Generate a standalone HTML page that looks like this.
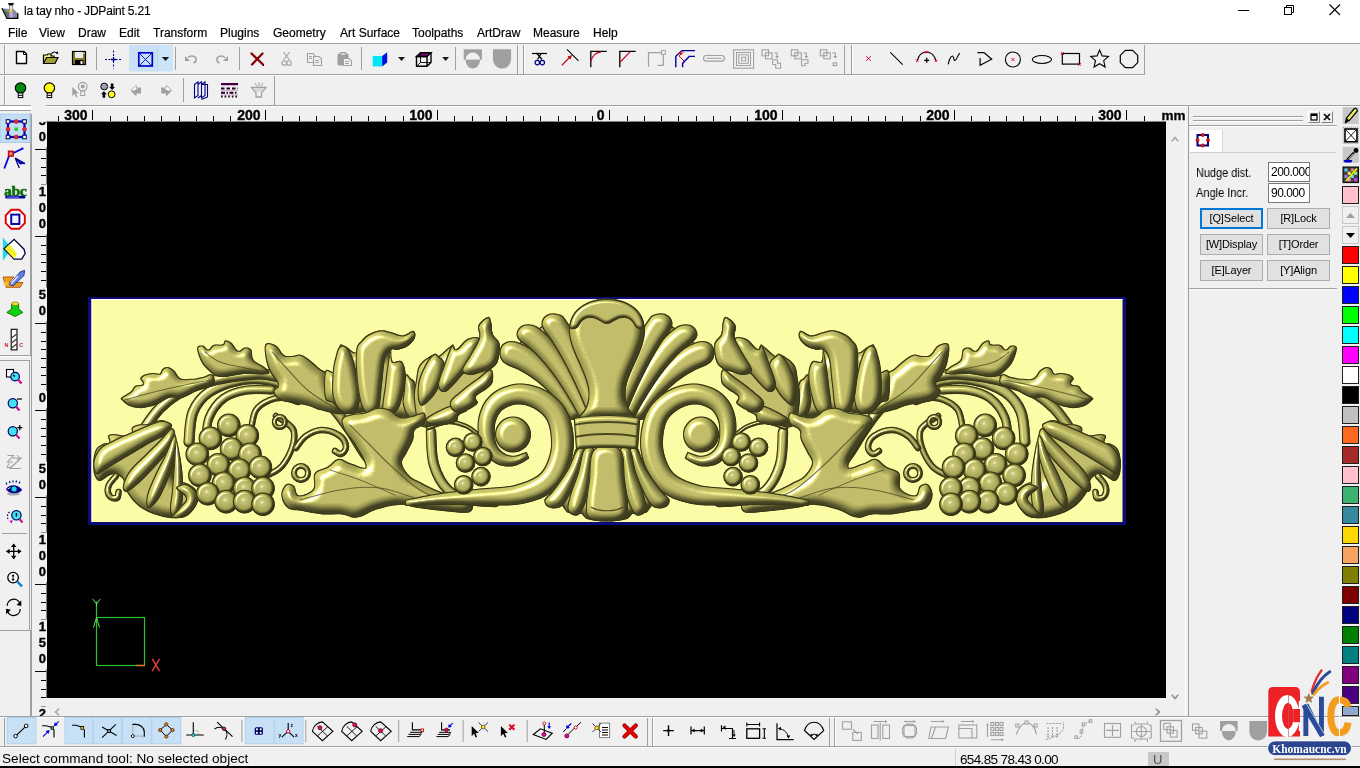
<!DOCTYPE html>
<html><head><meta charset="utf-8"><title>JDPaint</title>
<style>
*{margin:0;padding:0;box-sizing:border-box}
html,body{width:1360px;height:768px;overflow:hidden}
body{background:#f0f0f0;font-family:"Liberation Sans",sans-serif;position:relative;color:#000}
.a{position:absolute}
.t{white-space:nowrap;line-height:1;will-change:transform}
svg text{will-change:transform}
svg{overflow:visible}
</style></head><body>

<div class="a" style="left:0px;top:0px;width:1360px;height:43px;background:#fff"></div>
<div class="a t" style="left:23.5px;top:5px;font-size:12px;letter-spacing:-0.2px;-webkit-text-stroke:0.15px #000">la tay nho - JDPaint 5.21</div>
<svg class="a" style="left:0px;top:0px;" width="20" height="20" viewBox="0 0 20 20"><path d="M8,3 H14 L13,5.5 H9 Z" fill="#111"/><rect x="9.6" y="5.5" width="3" height="7.5" fill="#e8e8e8" stroke="#555" stroke-width="0.6"/><path d="M2,8.3 L6.9,18.3 H17.8 V13.2 L13.5,9 H12 V13 H9 V9 Z" fill="#8a8aa0"/><path d="M2,8.3 L6.9,18.3 H17.8 V13.2" fill="none" stroke="#000" stroke-width="1.3"/><rect x="9.5" y="13" width="3.5" height="4.5" fill="#c0a0ff"/><circle cx="10.9" cy="11" r="1.6" fill="#f0d020"/><path d="M3,9 L7,17 H9 V13 Z" fill="#607050"/></svg>
<div class="a t" style="left:7.5px;top:27px;font-size:12px;-webkit-text-stroke:0.2px #000">File</div>
<div class="a t" style="left:38.8px;top:27px;font-size:12px;-webkit-text-stroke:0.2px #000">View</div>
<div class="a t" style="left:78.4px;top:27px;font-size:12px;-webkit-text-stroke:0.2px #000">Draw</div>
<div class="a t" style="left:119.3px;top:27px;font-size:12px;-webkit-text-stroke:0.2px #000">Edit</div>
<div class="a t" style="left:153.4px;top:27px;font-size:12px;-webkit-text-stroke:0.2px #000">Transform</div>
<div class="a t" style="left:220px;top:27px;font-size:12px;-webkit-text-stroke:0.2px #000">Plugins</div>
<div class="a t" style="left:273.4px;top:27px;font-size:12px;-webkit-text-stroke:0.2px #000">Geometry</div>
<div class="a t" style="left:339.6px;top:27px;font-size:12px;-webkit-text-stroke:0.2px #000">Art Surface</div>
<div class="a t" style="left:411.7px;top:27px;font-size:12px;-webkit-text-stroke:0.2px #000">Toolpaths</div>
<div class="a t" style="left:476.5px;top:27px;font-size:12px;-webkit-text-stroke:0.2px #000">ArtDraw</div>
<div class="a t" style="left:533.3px;top:27px;font-size:12px;-webkit-text-stroke:0.2px #000">Measure</div>
<div class="a t" style="left:592.5px;top:27px;font-size:12px;-webkit-text-stroke:0.2px #000">Help</div>
<svg class="a" style="left:1238px;top:10px;" width="12" height="1" viewBox="0 0 12 1"><rect x="0" y="0" width="11" height="1" fill="#000"/></svg>
<svg class="a" style="left:1284px;top:5px;" width="11" height="10" viewBox="0 0 11 10"><rect x="0.5" y="2.5" width="7" height="7" fill="none" stroke="#000"/><path d="M2.5 2.5V0.5H9.5V7.5H7.5" fill="none" stroke="#000"/></svg>
<svg class="a" style="left:1329px;top:4px;" width="12" height="12" viewBox="0 0 12 12"><path d="M0.5 0.5L11 11M11 0.5L0.5 11" stroke="#000" stroke-width="1.1"/></svg>
<div class="a" style="left:0px;top:43px;width:1360px;height:1px;background:#a0a0a0"></div>
<div class="a" style="left:0px;top:74px;width:1145px;height:1px;background:#a0a0a0"></div>
<div class="a" style="left:0px;top:75px;width:1145px;height:1px;background:#fff"></div>
<div class="a" style="left:96px;top:47px;width:1px;height:23px;background:#a0a0a0"></div>
<div class="a" style="left:175px;top:47px;width:1px;height:23px;background:#a0a0a0"></div>
<div class="a" style="left:239px;top:47px;width:1px;height:23px;background:#a0a0a0"></div>
<div class="a" style="left:361px;top:47px;width:1px;height:23px;background:#a0a0a0"></div>
<div class="a" style="left:455px;top:47px;width:1px;height:23px;background:#a0a0a0"></div>
<div class="a" style="left:183px;top:78px;width:1px;height:24px;background:#a0a0a0"></div>
<div class="a" style="left:517px;top:45px;width:1px;height:29px;background:#a0a0a0"></div>
<div class="a" style="left:844px;top:45px;width:1px;height:29px;background:#a0a0a0"></div>
<div class="a" style="left:1144px;top:45px;width:1px;height:29px;background:#a0a0a0"></div>
<div class="a" style="left:523px;top:45px;width:1px;height:29px;background:#a0a0a0"></div>
<div class="a" style="left:524px;top:45px;width:1px;height:29px;background:#fff"></div>
<div class="a" style="left:851px;top:45px;width:1px;height:29px;background:#a0a0a0"></div>
<div class="a" style="left:852px;top:45px;width:1px;height:29px;background:#fff"></div>
<div class="a" style="left:0px;top:105px;width:31px;height:1px;background:#a0a0a0"></div>
<div class="a" style="left:0px;top:106px;width:31px;height:4px;background:#fff"></div>
<div class="a" style="left:4px;top:45px;width:1px;height:29px;background:#a0a0a0"></div>
<div class="a" style="left:5px;top:45px;width:1px;height:29px;background:#fff"></div>
<div class="a" style="left:4px;top:76px;width:1px;height:29px;background:#a0a0a0"></div>
<div class="a" style="left:5px;top:76px;width:1px;height:29px;background:#fff"></div>
<div class="a" style="left:274px;top:76px;width:1px;height:29px;background:#a0a0a0"></div>
<div class="a" style="left:46px;top:105px;width:1314px;height:1px;background:#a0a0a0"></div>
<div class="a" style="left:46px;top:106px;width:1314px;height:1px;background:#fff"></div>
<div class="a" style="left:47px;top:122px;width:1119px;height:576px;background:#000"></div>
<div class="a" style="left:46px;top:121px;width:1120px;height:1px;background:#808080"></div>
<div class="a" style="left:46px;top:121px;width:1px;height:577px;background:#808080"></div>
<svg class="a" style="left:0;top:0;overflow:hidden" width="1360" height="768" viewBox="0 0 1360 768"><defs><radialGradient id="gg" cx="0.45" cy="0.42" r="0.6"><stop offset="0" stop-color="#f2eeb8"/><stop offset="0.15" stop-color="#c0bc70"/><stop offset="0.5" stop-color="#a6a452"/><stop offset="1" stop-color="#86843e"/></radialGradient><filter id="L1" x="85" y="290" width="1045" height="240" filterUnits="userSpaceOnUse" color-interpolation-filters="sRGB">
<feGaussianBlur in="SourceAlpha" stdDeviation="1.6" result="b"/>
<feDiffuseLighting in="b" surfaceScale="5" diffuseConstant="1" lighting-color="#fff" result="d"><feDistantLight azimuth="225" elevation="45"/></feDiffuseLighting>
<feSpecularLighting in="b" surfaceScale="5" specularConstant="1.0" specularExponent="35" lighting-color="#ffffe0" result="s"><feDistantLight azimuth="225" elevation="45"/></feSpecularLighting>
<feComposite in="SourceGraphic" in2="d" operator="arithmetic" k1="0.85" k2="0.36" k3="0" k4="0" result="m"/>
<feComposite in="s" in2="SourceAlpha" operator="in" result="s2"/>
<feComposite in="m" in2="s2" operator="arithmetic" k1="0" k2="1" k3="1" k4="0" result="o"/>
<feMorphology in="SourceAlpha" operator="erode" radius="0.8" result="er"/>
<feComposite in="SourceAlpha" in2="er" operator="out" result="edge"/>
<feFlood flood-color="#3a3814" result="fc"/>
<feComposite in="fc" in2="edge" operator="in" result="ed"/>
<feComposite in="o" in2="SourceAlpha" operator="in" result="o2"/>
<feMerge><feMergeNode in="o2"/><feMergeNode in="ed"/></feMerge>
</filter><filter id="L1b" x="85" y="290" width="1045" height="240" filterUnits="userSpaceOnUse" color-interpolation-filters="sRGB">
<feGaussianBlur in="SourceAlpha" stdDeviation="2.2" result="b"/>
<feDiffuseLighting in="b" surfaceScale="6" diffuseConstant="1" lighting-color="#fff" result="d"><feDistantLight azimuth="225" elevation="45"/></feDiffuseLighting>
<feSpecularLighting in="b" surfaceScale="6" specularConstant="1.0" specularExponent="35" lighting-color="#ffffe0" result="s"><feDistantLight azimuth="225" elevation="45"/></feSpecularLighting>
<feComposite in="SourceGraphic" in2="d" operator="arithmetic" k1="0.85" k2="0.36" k3="0" k4="0" result="m"/>
<feComposite in="s" in2="SourceAlpha" operator="in" result="s2"/>
<feComposite in="m" in2="s2" operator="arithmetic" k1="0" k2="1" k3="1" k4="0" result="o"/>
<feMorphology in="SourceAlpha" operator="erode" radius="0.8" result="er"/>
<feComposite in="SourceAlpha" in2="er" operator="out" result="edge"/>
<feFlood flood-color="#3a3814" result="fc"/>
<feComposite in="fc" in2="edge" operator="in" result="ed"/>
<feComposite in="o" in2="SourceAlpha" operator="in" result="o2"/>
<feMerge><feMergeNode in="o2"/><feMergeNode in="ed"/></feMerge>
</filter><filter id="L2" x="85" y="290" width="1045" height="240" filterUnits="userSpaceOnUse" color-interpolation-filters="sRGB">
<feGaussianBlur in="SourceAlpha" stdDeviation="3" result="b"/>
<feDiffuseLighting in="b" surfaceScale="7.5" diffuseConstant="1" lighting-color="#fff" result="d"><feDistantLight azimuth="225" elevation="45"/></feDiffuseLighting>
<feSpecularLighting in="b" surfaceScale="7.5" specularConstant="1.0" specularExponent="35" lighting-color="#ffffe0" result="s"><feDistantLight azimuth="225" elevation="45"/></feSpecularLighting>
<feComposite in="SourceGraphic" in2="d" operator="arithmetic" k1="0.85" k2="0.36" k3="0" k4="0" result="m"/>
<feComposite in="s" in2="SourceAlpha" operator="in" result="s2"/>
<feComposite in="m" in2="s2" operator="arithmetic" k1="0" k2="1" k3="1" k4="0" result="o"/>
<feMorphology in="SourceAlpha" operator="erode" radius="0.8" result="er"/>
<feComposite in="SourceAlpha" in2="er" operator="out" result="edge"/>
<feFlood flood-color="#3a3814" result="fc"/>
<feComposite in="fc" in2="edge" operator="in" result="ed"/>
<feComposite in="o" in2="SourceAlpha" operator="in" result="o2"/>
<feMerge><feMergeNode in="o2"/><feMergeNode in="ed"/></feMerge>
</filter><filter id="L3" x="85" y="290" width="1045" height="240" filterUnits="userSpaceOnUse" color-interpolation-filters="sRGB">
<feGaussianBlur in="SourceAlpha" stdDeviation="4.5" result="b"/>
<feDiffuseLighting in="b" surfaceScale="10" diffuseConstant="1" lighting-color="#fff" result="d"><feDistantLight azimuth="225" elevation="45"/></feDiffuseLighting>
<feSpecularLighting in="b" surfaceScale="10" specularConstant="1.0" specularExponent="35" lighting-color="#ffffe0" result="s"><feDistantLight azimuth="225" elevation="45"/></feSpecularLighting>
<feComposite in="SourceGraphic" in2="d" operator="arithmetic" k1="0.85" k2="0.36" k3="0" k4="0" result="m"/>
<feComposite in="s" in2="SourceAlpha" operator="in" result="s2"/>
<feComposite in="m" in2="s2" operator="arithmetic" k1="0" k2="1" k3="1" k4="0" result="o"/>
<feMorphology in="SourceAlpha" operator="erode" radius="0.8" result="er"/>
<feComposite in="SourceAlpha" in2="er" operator="out" result="edge"/>
<feFlood flood-color="#3a3814" result="fc"/>
<feComposite in="fc" in2="edge" operator="in" result="ed"/>
<feComposite in="o" in2="SourceAlpha" operator="in" result="o2"/>
<feMerge><feMergeNode in="o2"/><feMergeNode in="ed"/></feMerge>
</filter></defs><rect x="88" y="297" width="1038" height="228" fill="#0c0c78"/><rect x="91.5" y="299" width="1031" height="223" fill="#fcfca6"/><rect x="91.5" y="299" width="1031" height="1.2" fill="#fffff0"/><rect x="91.5" y="299" width="1.2" height="223" fill="#fffff0"/><path d="M276.0,416.0 C278.2,417.4 284.8,421.1 288.0,424.0 C291.2,426.9 293.3,427.7 294.0,432.0 C294.7,436.3 294.2,441.9 292.0,448.0 C289.8,454.1 286.0,461.3 282.0,466.0 C278.0,470.7 273.6,472.2 270.0,474.0 C266.4,475.8 263.4,475.6 262.0,476.0" fill="none" stroke="#b8b460" stroke-width="6.5" stroke-linecap="round" filter="url(#L1)"/><circle cx="279.8" cy="422" r="5.5" fill="none" stroke="#b8b460" stroke-width="5" filter="url(#L1)"/><path d="M296.0,448.0 C297.8,445.8 301.3,439.2 306.0,436.0 C310.7,432.8 315.9,430.0 322.0,430.0 C328.1,430.0 335.7,432.9 340.0,436.0 C344.3,439.1 345.8,443.8 346.0,447.0 C346.2,450.2 343.0,453.3 341.0,454.0 C339.0,454.7 336.1,451.5 335.0,451.0" fill="none" stroke="#b8b460" stroke-width="6.5" stroke-linecap="round" filter="url(#L1)"/><circle cx="301" cy="473" r="7" fill="none" stroke="#b8b460" stroke-width="6" filter="url(#L1)"/><path d="M251.0,430.0 C251.9,426.4 252.6,415.4 256.0,410.0 C259.4,404.6 264.8,402.2 270.0,400.0 C275.2,397.8 280.0,397.6 285.0,398.0 C290.0,398.4 295.7,401.3 298.0,402.0" fill="none" stroke="#b8b460" stroke-width="6.5" stroke-linecap="round" filter="url(#L1)"/><path d="M189.0,442.0 C189.7,436.6 189.4,421.0 193.0,412.0 C196.6,403.0 200.5,397.8 209.0,392.0 C217.5,386.2 229.0,382.2 240.0,380.0 C251.0,377.8 260.6,378.6 270.0,380.0 C279.4,381.4 288.0,386.6 292.0,388.0" fill="none" stroke="#b8b460" stroke-width="11" stroke-linecap="round" filter="url(#L1)"/><path d="M206.0,442.0 C206.5,437.7 205.8,425.9 209.0,418.0 C212.2,410.1 217.2,403.0 224.0,398.0 C230.8,393.0 238.4,391.4 247.0,390.0 C255.6,388.6 267.5,390.0 272.0,390.0" fill="none" stroke="#b8b460" stroke-width="9" stroke-linecap="round" filter="url(#L1)"/><path d="M142.0,432.0 C145.2,427.7 152.3,415.6 160.0,408.0 C167.7,400.4 175.1,395.0 185.0,390.0 C194.9,385.0 204.2,382.7 215.0,380.0 C225.8,377.3 235.1,375.9 245.0,375.0 C254.9,374.1 260.1,373.2 270.0,375.0 C279.9,376.8 289.2,379.6 300.0,385.0 C310.8,390.4 321.0,396.9 330.0,405.0 C339.0,413.1 342.8,420.1 350.0,430.0 C357.2,439.9 361.9,451.4 370.0,460.0 C378.1,468.6 384.2,471.9 395.0,478.0 C405.8,484.1 423.7,491.1 430.0,494.0" fill="none" stroke="#b8b460" stroke-width="11" stroke-linecap="round" filter="url(#L1b)"/><path d="M431.0,432.0 C431.5,437.9 430.9,454.6 434.0,465.0 C437.1,475.4 441.5,483.7 448.0,490.0 C454.5,496.3 461.5,497.8 470.0,500.0 C478.5,502.2 490.5,501.6 495.0,502.0" fill="none" stroke="#b8b460" stroke-width="10.5" stroke-linecap="round" filter="url(#L1)"/><path d="M428.0,428.0 C431.6,426.9 441.2,422.4 448.0,422.0 C454.8,421.6 460.2,423.5 466.0,426.0 C471.8,428.5 477.5,434.2 480.0,436.0" fill="none" stroke="#b8b460" stroke-width="4.5" stroke-linecap="round" filter="url(#L1)"/><path d="M93.3,459.8 C93.8,456.5 94.3,452.1 96.0,449.2 C97.7,446.3 100.2,445.1 102.6,443.9 C105.0,442.7 108.3,444.0 109.3,442.6 C110.3,441.2 107.3,437.5 108.0,436.0 C108.7,434.5 110.6,434.1 113.2,434.0 C115.8,433.9 119.2,434.9 122.5,435.3 C125.8,435.7 130.1,437.3 131.8,436.0 C133.5,434.7 130.6,430.1 131.8,428.0 C133.0,425.9 135.6,425.3 138.5,424.6 C141.4,423.9 143.8,424.8 147.8,424.0 C151.9,423.2 157.2,420.0 161.0,420.0 C164.8,420.0 167.1,421.1 169.0,424.0 C170.9,426.9 170.9,431.9 171.6,436.0 C172.3,440.1 172.5,442.7 173.0,446.5 C173.5,450.3 173.8,453.4 174.3,457.2 C174.8,461.0 175.6,464.5 175.6,467.8 C175.6,471.1 174.0,472.9 174.3,475.8 C174.6,478.7 175.1,482.5 177.0,483.7 C178.9,484.9 181.6,481.4 184.9,482.4 C188.2,483.4 193.1,485.9 195.5,489.0 C197.9,492.1 198.7,495.8 198.2,499.6 C197.7,503.4 195.3,507.2 192.9,510.3 C190.5,513.4 188.7,515.5 184.9,516.9 C181.1,518.3 176.4,518.4 171.6,518.2 C166.8,518.0 163.2,517.0 158.4,515.6 C153.6,514.2 149.4,512.7 145.1,510.3 C140.8,507.9 138.1,506.1 134.5,502.3 C130.9,498.5 127.4,493.3 125.2,489.0 C123.0,484.7 124.9,481.0 122.5,478.4 C120.1,475.8 116.0,473.9 111.9,474.4 C107.9,474.9 103.1,480.7 100.0,481.0 C96.9,481.3 95.9,478.2 94.7,475.8 C93.5,473.4 93.6,470.7 93.3,467.8 C93.0,464.9 92.8,463.1 93.3,459.8Z" fill="#b8b460" filter="url(#L3)"/><path d="M116.0,476.0 C114.7,477.8 109.7,482.4 108.5,486.0 C107.3,489.6 108.0,493.8 109.5,496.0 C111.0,498.2 115.4,498.7 117.0,498.0 C118.6,497.3 118.2,493.1 118.5,492.0" fill="none" stroke="#b8b460" stroke-width="6.5" stroke-linecap="round" filter="url(#L1)"/><path d="M93.5,461.0 C94.2,456.3 97.0,451.4 100.0,448.0 C103.0,444.6 106.4,444.0 110.0,442.0 C113.6,440.0 116.0,438.8 120.0,437.0 C124.0,435.2 127.0,434.2 132.0,432.0 C137.0,429.8 142.6,427.0 148.0,425.0 C153.4,423.0 157.7,421.0 162.0,421.0 C166.3,421.0 171.5,422.5 172.0,425.0 C172.5,427.5 169.0,431.8 165.0,435.0 C161.0,438.2 155.4,439.9 150.0,443.0 C144.6,446.1 140.8,448.6 135.0,452.0 C129.2,455.4 123.4,458.8 118.0,462.0 C112.6,465.2 109.0,467.8 105.0,470.0 C101.0,472.2 98.1,475.6 96.0,474.0 C93.9,472.4 92.8,465.7 93.5,461.0Z" fill="#b8b460" filter="url(#L2)"/><path d="M172.0,428.0 C169.3,428.0 164.9,435.1 160.0,440.0 C155.1,444.9 150.4,449.6 145.0,455.0 C139.6,460.4 134.0,464.6 130.0,470.0 C126.0,475.4 123.7,481.0 123.0,485.0 C122.3,489.0 123.3,492.2 126.0,492.0 C128.7,491.8 133.3,488.0 138.0,484.0 C142.7,480.0 147.1,475.2 152.0,470.0 C156.9,464.8 160.9,460.4 165.0,455.0 C169.1,449.6 173.7,444.9 175.0,440.0 C176.3,435.1 174.7,428.0 172.0,428.0Z" fill="#b8b460" filter="url(#L2)"/><path d="M174.0,435.0 C171.8,436.8 168.4,447.8 165.0,455.0 C161.6,462.2 158.2,467.8 155.0,475.0 C151.8,482.2 148.3,489.1 147.0,495.0 C145.7,500.9 146.0,507.1 148.0,508.0 C150.0,508.9 154.6,504.7 158.0,500.0 C161.4,495.3 164.1,488.8 167.0,482.0 C169.9,475.2 172.2,468.7 174.0,462.0 C175.8,455.3 177.0,449.9 177.0,445.0 C177.0,440.1 176.2,433.2 174.0,435.0Z" fill="#b8b460" filter="url(#L2)"/><path d="M176.0,440.0 C174.9,441.8 174.7,456.0 174.0,465.0 C173.3,474.0 172.7,481.9 172.0,490.0 C171.3,498.1 169.5,505.1 170.0,510.0 C170.5,514.9 172.8,517.9 175.0,517.0 C177.2,516.1 180.6,511.7 182.0,505.0 C183.4,498.3 183.4,489.0 183.0,480.0 C182.6,471.0 181.3,462.2 180.0,455.0 C178.7,447.8 177.1,438.2 176.0,440.0Z" fill="#b8b460" filter="url(#L2)"/><path d="M176.0,488.0 C176.0,485.5 182.6,483.6 186.0,484.0 C189.4,484.4 192.8,487.1 195.0,490.0 C197.2,492.9 198.4,496.4 198.0,500.0 C197.6,503.6 195.7,506.9 193.0,510.0 C190.3,513.1 186.8,515.7 183.0,517.0 C179.2,518.3 172.5,518.8 172.0,517.0 C171.5,515.2 177.5,510.4 180.0,507.0 C182.5,503.6 186.7,501.4 186.0,498.0 C185.3,494.6 176.0,490.5 176.0,488.0Z" fill="#b8b460" filter="url(#L2)"/><path d="M121.3,397.7 C122.9,396.1 128.5,393.3 131.0,391.2 C133.5,389.1 132.9,387.3 135.0,386.0 C137.1,384.7 141.9,385.4 142.8,384.0 C143.7,382.6 139.7,379.9 140.2,378.2 C140.7,376.5 142.8,375.2 145.4,374.3 C148.0,373.4 151.9,373.1 154.5,373.0 C157.1,372.9 158.3,374.3 159.7,373.6 C161.1,372.9 160.9,370.2 162.3,369.0 C163.7,367.8 165.4,366.9 167.5,367.1 C169.6,367.3 171.7,368.3 174.0,370.3 C176.3,372.3 177.5,376.7 180.5,378.2 C183.5,379.7 186.9,379.0 190.9,378.8 C194.9,378.6 198.8,377.7 202.6,376.9 C206.4,376.1 209.9,373.0 212.0,374.3 C214.1,375.6 216.2,381.4 214.0,384.0 C211.8,386.6 205.6,386.5 200.0,389.0 C194.4,391.5 188.4,396.1 183.0,397.7 C177.6,399.3 174.2,396.8 170.0,397.7 C165.8,398.6 163.4,401.3 159.7,402.9 C156.0,404.5 153.0,405.9 149.3,406.8 C145.6,407.7 142.7,408.3 138.9,408.1 C135.1,407.9 131.4,406.9 128.4,405.5 C125.4,404.1 123.3,401.7 122.0,400.3 C120.7,398.9 119.7,399.3 121.3,397.7Z" fill="#b8b460" filter="url(#L2)"/><path d="M125.0,400.0 C129.5,398.7 140.1,395.5 150.0,393.0 C159.9,390.5 169.2,388.3 180.0,386.0 C190.8,383.7 204.6,381.1 210.0,380.0" fill="none" stroke="#4a4820" stroke-width="1.1" stroke-linecap="round" opacity="0.75"/><path d="M197.2,347.6 C197.7,345.0 201.0,345.3 203.0,345.6 C205.0,345.9 206.3,349.6 208.2,349.5 C210.1,349.4 210.8,345.9 213.4,345.0 C216.0,344.1 220.5,345.1 222.6,344.3 C224.7,343.5 223.6,340.6 225.2,340.4 C226.8,340.2 229.4,341.1 231.7,343.0 C234.0,344.9 235.9,350.0 238.2,350.8 C240.5,351.6 242.4,347.8 244.7,347.6 C247.0,347.4 249.6,347.3 251.2,349.5 C252.8,351.7 251.2,356.7 253.8,360.0 C256.4,363.3 262.9,365.3 265.5,367.8 C268.1,370.3 271.7,372.9 268.0,374.0 C264.3,375.1 253.6,373.5 245.0,374.0 C236.4,374.5 226.8,377.9 220.0,377.0 C213.2,376.1 210.5,372.1 207.0,369.0 C203.5,365.9 202.2,363.9 200.4,360.0 C198.6,356.1 196.7,350.2 197.2,347.6Z" fill="#b8b460" filter="url(#L2)"/><path d="M205.0,352.0 C207.7,353.8 212.8,359.1 220.0,362.0 C227.2,364.9 236.9,366.2 245.0,368.0 C253.1,369.8 261.4,371.3 265.0,372.0" fill="none" stroke="#4a4820" stroke-width="1.1" stroke-linecap="round" opacity="0.75"/><path d="M265.5,344.3 C267.3,341.7 272.7,343.7 276.0,345.6 C279.3,347.5 280.9,352.8 283.8,354.7 C286.6,356.6 288.5,356.0 291.6,356.0 C294.7,356.0 297.4,354.0 300.7,354.7 C304.0,355.4 306.3,357.4 309.8,360.0 C313.3,362.6 317.2,366.7 320.2,369.0 C323.2,371.3 325.1,370.7 326.7,373.0 C328.3,375.3 328.3,378.9 329.3,382.0 C330.3,385.1 330.1,386.2 332.0,390.0 C333.9,393.8 338.2,398.7 340.0,403.0 C341.8,407.3 345.6,412.7 342.0,414.0 C338.4,415.3 326.3,411.5 320.0,410.0 C313.7,408.5 314.0,407.2 307.0,405.5 C300.0,403.8 287.1,402.9 281.0,400.3 C274.9,397.7 273.8,394.0 273.3,391.2 C272.8,388.4 278.5,388.0 278.0,384.7 C277.5,381.4 272.9,377.4 270.7,373.0 C268.5,368.6 266.9,365.2 266.0,360.0 C265.1,354.8 263.7,346.9 265.5,344.3Z" fill="#b8b460" filter="url(#L3)"/><path d="M272.0,352.0 C275.2,355.6 283.2,364.8 290.0,372.0 C296.8,379.2 301.4,385.2 310.0,392.0 C318.6,398.8 333.0,406.8 338.0,410.0" fill="none" stroke="#4a4820" stroke-width="1.1" stroke-linecap="round" opacity="0.75"/><path d="M325.0,371.9 C326.4,367.2 330.5,372.1 332.8,371.9 C335.1,371.7 336.3,369.9 338.0,370.6 C339.7,371.3 341.8,380.0 342.0,375.8 C342.2,371.6 338.6,352.4 339.3,347.1 C340.0,341.8 342.8,345.6 345.8,346.5 C348.8,347.4 353.2,353.6 356.2,352.3 C359.2,351.0 359.9,342.8 362.7,339.3 C365.5,335.8 368.4,334.4 371.9,332.8 C375.4,331.2 378.6,330.2 382.3,330.2 C386.0,330.2 389.0,331.9 392.7,332.8 C396.4,333.7 399.4,335.7 403.1,335.4 C406.8,335.1 411.4,330.4 413.5,330.9 C415.6,331.4 415.7,335.3 414.8,338.0 C413.9,340.7 411.3,343.7 408.3,345.8 C405.3,347.9 400.9,349.0 397.9,349.7 C394.9,350.4 392.3,347.6 391.4,349.7 C390.5,351.8 390.8,359.3 392.7,361.4 C394.6,363.5 399.5,359.0 401.8,361.4 C404.1,363.8 404.1,371.4 405.7,374.5 C407.3,377.6 409.3,377.0 410.9,378.4 C412.5,379.8 413.4,379.0 414.8,382.3 C416.2,385.6 417.1,391.5 418.7,396.6 C420.3,401.7 422.7,406.9 423.9,410.9 C425.1,414.9 429.5,417.4 425.2,418.7 C420.9,420.0 409.9,419.2 400.0,418.0 C390.1,416.8 379.9,412.7 370.0,412.0 C360.1,411.3 351.7,415.6 345.0,414.0 C338.3,412.4 336.4,406.0 332.8,403.1 C329.2,400.2 326.4,403.5 325.0,397.9 C323.6,392.3 323.6,376.6 325.0,371.9Z" fill="#b8b460" filter="url(#L3)"/><path d="M332.8,372.0 C333.3,364.3 334.8,359.5 336.0,355.0 C337.2,350.5 337.5,348.5 339.3,347.0 C341.1,345.5 343.7,344.9 346.0,346.5 C348.3,348.1 350.0,350.9 352.0,356.0 C354.0,361.1 355.6,367.4 357.0,375.0 C358.4,382.6 360.4,391.3 360.0,398.0 C359.6,404.7 358.2,409.5 355.0,412.0 C351.8,414.5 346.0,414.5 342.0,412.0 C338.0,409.5 334.7,405.2 333.0,398.0 C331.3,390.8 332.3,379.7 332.8,372.0Z" fill="#b8b460" filter="url(#L2)"/><path d="M405.7,374.5 C406.9,372.4 409.3,377.0 410.9,378.4 C412.5,379.8 413.4,379.0 414.8,382.3 C416.2,385.6 417.1,391.5 418.7,396.6 C420.3,401.7 422.7,406.9 423.9,410.9 C425.1,414.9 427.7,417.4 425.2,418.7 C422.7,420.0 414.0,420.5 410.0,418.0 C406.0,415.5 404.1,410.0 403.0,405.0 C401.9,400.0 403.5,395.5 404.0,390.0 C404.5,384.5 404.5,376.6 405.7,374.5Z" fill="#b8b460" filter="url(#L2)"/><path d="M391.0,350.0 C391.8,349.9 390.8,359.3 392.7,361.4 C394.6,363.5 399.5,359.0 401.8,361.4 C404.1,363.8 405.5,368.5 405.7,374.5 C405.9,380.5 404.7,388.2 403.0,395.0 C401.3,401.8 399.6,408.9 396.0,412.0 C392.4,415.1 385.0,416.9 383.0,412.0 C381.0,407.1 384.1,394.0 385.0,385.0 C385.9,376.0 386.9,368.3 388.0,362.0 C389.1,355.7 390.2,350.1 391.0,350.0Z" fill="#b8b460" filter="url(#L2)"/><path d="M356.0,352.0 C356.8,342.9 359.8,342.8 362.7,339.3 C365.6,335.8 368.5,334.4 372.0,332.8 C375.5,331.2 378.2,330.2 382.0,330.2 C385.8,330.2 389.2,331.9 393.0,332.8 C396.8,333.7 399.3,335.7 403.0,335.4 C406.7,335.1 411.4,330.4 413.5,330.9 C415.6,331.4 415.8,335.3 414.8,338.0 C413.8,340.7 411.0,343.7 408.0,345.8 C405.0,347.9 401.1,348.9 398.0,349.7 C394.9,350.5 393.3,348.1 391.0,350.0 C388.7,351.9 386.6,353.7 385.0,360.0 C383.4,366.3 383.3,376.0 382.0,385.0 C380.7,394.0 381.1,405.1 378.0,410.0 C374.9,414.9 368.6,415.6 365.0,412.0 C361.4,408.4 359.6,400.8 358.0,390.0 C356.4,379.2 355.2,361.1 356.0,352.0Z" fill="#b8b460" filter="url(#L2)"/><path d="M420.0,364.3 C423.1,359.7 430.2,355.7 433.5,354.2 C436.8,352.7 435.2,357.6 438.6,355.9 C442.0,354.2 449.0,346.1 452.2,344.9 C455.4,343.7 453.7,350.2 456.4,349.1 C459.1,348.0 463.3,340.9 467.4,338.9 C471.5,336.9 477.2,340.4 479.2,338.0 C481.2,335.6 476.9,329.2 478.4,325.4 C479.9,321.6 485.4,317.5 487.7,316.9 C490.0,316.3 490.2,318.9 491.1,322.0 C492.0,325.1 491.3,329.9 492.8,333.9 C494.3,337.9 498.7,339.1 499.6,344.0 C500.5,348.9 499.4,356.3 497.9,360.9 C496.4,365.5 492.0,365.7 491.1,369.4 C490.2,373.1 493.4,377.9 492.8,381.2 C492.2,384.5 490.7,385.2 487.7,388.0 C484.7,390.8 477.7,393.8 475.9,396.5 C474.1,399.2 479.0,400.8 477.5,403.2 C476.0,405.6 470.7,407.9 467.4,410.0 C464.1,412.1 461.0,413.0 458.9,415.1 C456.8,417.2 459.5,420.1 455.5,421.9 C451.5,423.7 443.3,424.7 436.9,425.3 C430.5,425.9 424.1,429.9 420.0,425.3 C415.9,420.7 414.7,408.2 414.0,400.0 C413.3,391.8 414.9,386.4 416.0,380.0 C417.1,373.6 416.9,368.9 420.0,364.3Z" fill="#b8b460" filter="url(#L3)"/><path d="M433.5,354.2 C435.9,352.6 436.5,354.0 438.6,355.9 C440.7,357.8 444.7,359.8 445.0,365.0 C445.3,370.2 442.7,378.7 440.0,385.0 C437.3,391.3 433.6,396.4 430.0,400.0 C426.4,403.6 422.2,407.7 420.0,405.0 C417.8,402.3 417.1,392.2 418.0,385.0 C418.9,377.8 422.2,370.5 425.0,365.0 C427.8,359.5 431.1,355.8 433.5,354.2Z" fill="#b8b460" filter="url(#L2)"/><path d="M452.0,345.0 C454.2,342.1 453.6,350.2 456.4,349.1 C459.2,348.0 463.3,340.9 467.4,338.9 C471.5,336.9 477.1,336.0 479.0,338.0 C480.9,340.0 479.6,345.1 478.0,350.0 C476.4,354.9 473.6,359.6 470.0,365.0 C466.4,370.4 462.5,375.1 458.0,380.0 C453.5,384.9 448.6,391.1 445.0,392.0 C441.4,392.9 438.2,389.9 438.0,385.0 C437.8,380.1 441.5,372.2 444.0,365.0 C446.5,357.8 449.8,347.9 452.0,345.0Z" fill="#b8b460" filter="url(#L2)"/><path d="M467.4,410.0 C468.1,411.8 461.0,413.0 458.9,415.1 C456.8,417.2 459.5,420.1 455.5,421.9 C451.5,423.7 442.4,425.6 436.9,425.3 C431.4,425.0 424.4,422.8 425.0,420.0 C425.6,417.2 434.6,412.7 440.0,410.0 C445.4,407.3 450.1,405.0 455.0,405.0 C459.9,405.0 466.7,408.2 467.4,410.0Z" fill="#b8b460" filter="url(#L2)"/><path d="M491.1,369.4 C493.8,370.0 493.4,377.9 492.8,381.2 C492.2,384.5 490.7,385.2 487.7,388.0 C484.7,390.8 477.7,393.8 475.9,396.5 C474.1,399.2 479.0,400.8 477.5,403.2 C476.0,405.6 471.4,408.4 467.4,410.0 C463.3,411.6 458.1,413.4 455.0,412.0 C451.9,410.6 448.7,406.0 450.0,402.0 C451.3,398.0 457.0,394.3 462.0,390.0 C467.0,385.7 472.8,381.7 478.0,378.0 C483.2,374.3 488.4,368.8 491.1,369.4Z" fill="#b8b460" filter="url(#L2)"/><path d="M478.4,325.4 C480.0,321.6 485.4,317.5 487.7,316.9 C490.0,316.3 490.2,318.9 491.1,322.0 C492.0,325.1 491.3,329.9 492.8,333.9 C494.3,337.9 498.7,339.1 499.6,344.0 C500.5,348.9 499.4,356.4 497.9,360.9 C496.4,365.4 493.9,367.0 491.0,369.0 C488.1,371.0 485.8,370.9 482.0,372.0 C478.2,373.1 473.6,375.4 470.0,375.0 C466.4,374.6 462.0,373.6 462.0,370.0 C462.0,366.4 466.9,360.8 470.0,355.0 C473.1,349.2 477.5,343.3 479.0,338.0 C480.5,332.7 476.8,329.2 478.4,325.4Z" fill="#b8b460" filter="url(#L2)"/><path d="M341.7,419.0 C342.9,415.9 347.3,415.4 351.3,414.3 C355.3,413.2 359.4,413.8 364.0,412.7 C368.6,411.6 372.1,408.6 376.7,408.0 C381.3,407.4 386.0,408.4 389.4,409.5 C392.8,410.6 393.4,412.9 395.7,414.3 C398.0,415.7 399.2,417.2 402.1,417.5 C405.0,417.8 407.6,416.8 411.6,415.9 C415.6,415.0 422.0,411.3 424.3,412.7 C426.6,414.1 426.0,420.7 424.3,423.8 C422.6,426.9 416.8,427.3 414.8,430.2 C412.8,433.1 414.6,435.7 413.2,439.7 C411.8,443.7 408.9,448.1 406.9,452.4 C404.9,456.7 401.5,459.3 402.1,463.6 C402.7,467.9 406.6,472.9 410.0,476.3 C413.4,479.7 416.9,480.3 421.2,482.6 C425.5,484.9 428.7,486.8 433.9,489.0 C439.1,491.2 443.5,493.0 450.0,495.0 C456.5,497.0 466.4,496.9 470.0,500.0 C473.6,503.1 474.5,510.0 470.0,512.0 C465.5,514.0 454.4,511.9 445.0,511.2 C435.6,510.5 426.3,509.1 418.0,508.0 C409.7,506.9 406.3,504.6 398.9,504.9 C391.5,505.2 384.1,507.3 376.7,509.6 C369.3,511.9 363.9,516.7 357.6,517.6 C351.3,518.5 348.0,515.0 341.7,514.4 C335.4,513.8 329.6,515.0 322.7,514.4 C315.8,513.8 309.9,512.4 303.6,511.2 C297.3,510.0 291.7,510.9 287.7,508.0 C283.7,505.1 281.7,499.6 281.4,495.3 C281.1,491.0 283.7,485.9 286.0,484.2 C288.3,482.5 291.7,483.8 294.0,485.8 C296.3,487.8 295.4,494.7 298.8,495.3 C302.2,495.9 310.2,493.0 313.1,489.0 C316.0,485.0 312.1,477.1 314.7,473.1 C317.3,469.1 323.1,469.3 327.4,466.7 C331.7,464.1 334.3,459.4 338.6,458.8 C342.9,458.2 346.4,462.2 351.3,463.6 C356.2,465.0 365.0,470.1 365.6,466.7 C366.2,463.3 358.1,450.8 354.4,444.5 C350.7,438.2 347.2,436.4 344.9,431.8 C342.6,427.2 340.5,422.1 341.7,419.0Z" fill="#b8b460" filter="url(#L3)"/><path d="M350.0,425.0 C353.6,428.6 362.8,437.8 370.0,445.0 C377.2,452.2 381.0,456.9 390.0,465.0 C399.0,473.1 409.2,483.3 420.0,490.0 C430.8,496.7 444.6,499.8 450.0,502.0" fill="none" stroke="#4a4820" stroke-width="1.1" stroke-linecap="round" opacity="0.75"/><path d="M300.0,500.0 C307.2,498.2 325.6,492.2 340.0,490.0 C354.4,487.8 365.6,486.2 380.0,488.0 C394.4,489.8 412.8,497.8 420.0,500.0" fill="none" stroke="#4a4820" stroke-width="1.1" stroke-linecap="round" opacity="0.75"/><path d="M330.0,470.0 C335.4,471.8 348.3,475.5 360.0,480.0 C371.7,484.5 388.7,492.3 395.0,495.0" fill="none" stroke="#4a4820" stroke-width="1" stroke-linecap="round" opacity="0.75"/><circle cx="228.8" cy="425.3" r="11.8" fill="url(#gg)" filter="url(#L1)"/><circle cx="247.3" cy="435.8" r="11.8" fill="url(#gg)" filter="url(#L1)"/><circle cx="210.4" cy="438.4" r="11.8" fill="url(#gg)" filter="url(#L1)"/><circle cx="231.5" cy="449" r="11.8" fill="url(#gg)" filter="url(#L1)"/><circle cx="249.9" cy="454.2" r="11.8" fill="url(#gg)" filter="url(#L1)"/><circle cx="197.3" cy="454.2" r="11.8" fill="url(#gg)" filter="url(#L1)"/><circle cx="218.3" cy="464.7" r="11.8" fill="url(#gg)" filter="url(#L1)"/><circle cx="239.4" cy="470" r="11.8" fill="url(#gg)" filter="url(#L1)"/><circle cx="260.4" cy="467.4" r="11.8" fill="url(#gg)" filter="url(#L1)"/><circle cx="199.9" cy="475.3" r="11.8" fill="url(#gg)" filter="url(#L1)"/><circle cx="223.6" cy="483.2" r="11.8" fill="url(#gg)" filter="url(#L1)"/><circle cx="244.6" cy="488.4" r="11.8" fill="url(#gg)" filter="url(#L1)"/><circle cx="263" cy="488.4" r="11.8" fill="url(#gg)" filter="url(#L1)"/><circle cx="207.8" cy="493.7" r="11.8" fill="url(#gg)" filter="url(#L1)"/><circle cx="226.2" cy="501.6" r="11.8" fill="url(#gg)" filter="url(#L1)"/><circle cx="244.6" cy="501.6" r="11.8" fill="url(#gg)" filter="url(#L1)"/><circle cx="263" cy="504.2" r="11.8" fill="url(#gg)" filter="url(#L1)"/><path d="M507,350 C520,345 535,330 550,320 C565,316 575,330 585,360 C592,385 598,405 605,418 L572,420 C555,395 535,372 514,364 Z" fill="#b8b460" filter="url(#L2)"/><path d="M499.5,353 C499.5,343 507,339.5 516,341.5 C540,348 564,377 584,417 L571,420 C556,397 536,377 514,368 C505,365 499.5,361 499.5,353 Z" fill="#b8b460" filter="url(#L2)"/><path d="M516.5,334 C517.5,324.5 528,322 537,326.5 C560,341 581,380 597,417 L580,419 C566,392 547,362 525,345 C519,341 516.5,338 516.5,334 Z" fill="#b8b460" filter="url(#L2)"/><path d="M541.5,323 C542.5,313 554,310.5 563,316 C577,333 593,378 606,417 L589,418 C578,388 561,354 547,335 C543,330 541.5,327 541.5,323 Z" fill="#b8b460" filter="url(#L2)"/><path d="M405.4,506.0 L407.1,506.0 L409.2,506.0 L411.6,505.9 L414.4,505.8 L417.4,505.7 L420.5,505.5 L423.8,505.4 L427.2,505.2 L430.6,505.1 L434.0,505.0 L437.3,504.9 L440.5,504.8 L443.6,504.8 L446.8,504.9 L450.0,504.9 L453.3,505.0 L456.6,505.1 L460.0,505.2 L463.4,505.3 L466.8,505.4 L470.2,505.5 L473.7,505.5 L477.1,505.5 L480.5,505.4 L483.8,505.4 L487.1,505.4 L490.5,505.4 L494.0,505.5 L497.5,505.5 L501.1,505.5 L504.7,505.5 L508.2,505.4 L511.8,505.2 L515.4,504.9 L518.9,504.5 L522.3,503.9 L525.5,503.2 L528.6,502.5 L531.6,501.7 L534.7,500.8 L537.7,499.8 L540.7,498.7 L543.6,497.3 L546.5,495.8 L549.3,494.1 L552.0,492.2 L554.6,490.0 L557.1,487.7 L559.4,485.1 L561.5,482.4 L563.3,479.5 L565.1,476.6 L566.6,473.5 L568.0,470.4 L569.2,467.3 L570.3,464.2 L571.3,461.0 L572.1,457.9 L572.8,454.7 L573.3,451.6 L573.7,448.4 L573.9,445.0 L574.0,441.7 L573.9,438.4 L573.6,435.0 L573.2,431.8 L572.7,428.5 L572.1,425.4 L571.3,422.3 L570.5,419.3 L569.5,416.4 L568.4,413.6 L567.1,410.9 L565.6,408.2 L564.0,405.8 L562.3,403.5 L560.4,401.4 L558.5,399.5 L556.6,397.7 L554.6,396.0 L552.6,394.5 L550.6,393.1 L548.6,391.8 L546.6,390.5 L544.4,389.4 L542.1,388.3 L539.7,387.3 L537.3,386.4 L534.9,385.7 L532.5,385.0 L530.0,384.5 L527.5,384.0 L525.0,383.7 L522.5,383.6 L520.0,383.5 L517.5,383.6 L515.0,383.8 L512.5,384.2 L510.1,384.7 L507.7,385.4 L505.4,386.2 L503.1,387.0 L500.8,388.0 L498.6,389.1 L496.5,390.3 L494.5,391.6 L492.5,393.0 L490.7,394.5 L489.0,396.2 L487.4,397.9 L485.9,399.8 L484.6,401.7 L483.4,403.6 L482.4,405.6 L481.4,407.7 L480.6,409.7 L479.9,411.8 L479.2,413.9 L478.7,416.0 L478.3,418.1 L477.9,420.4 L477.7,422.7 L477.6,425.1 L477.5,427.5 L477.6,429.8 L477.8,432.2 L478.0,434.5 L478.3,436.8 L478.7,439.0 L479.2,441.2 L479.8,443.3 L480.4,445.3 L481.1,447.2 L482.0,449.1 L482.9,450.8 L484.0,452.5 L485.1,454.1 L486.2,455.6 L487.4,457.0 L488.7,458.3 L490.0,459.5 L491.3,460.6 L492.7,461.6 L494.1,462.5 L495.6,463.4 L497.1,464.2 L498.7,464.9 L500.4,465.4 L502.0,465.8 L503.7,466.1 L505.3,466.4 L507.0,466.5 L508.6,466.6 L510.2,466.5 L511.8,466.4 L513.4,466.2 L515.2,465.8 L517.0,465.3 L518.7,464.6 L520.3,463.8 L521.8,463.0 L523.3,462.2 L524.7,461.4 L526.0,460.6 L527.1,459.8 L528.1,459.2 L528.8,458.6 L529.4,458.2 L526.6,451.8 L525.7,452.0 L524.7,452.4 L523.5,452.8 L522.3,453.3 L520.9,453.8 L519.6,454.3 L518.2,454.8 L516.8,455.2 L515.5,455.5 L514.4,455.8 L513.4,455.8 L512.6,455.8 L511.7,455.7 L510.7,455.5 L509.7,455.3 L508.7,455.1 L507.7,454.7 L506.7,454.4 L505.8,454.0 L504.9,453.5 L504.1,453.0 L503.3,452.5 L502.6,452.0 L501.9,451.5 L501.3,450.8 L500.6,450.1 L499.9,449.4 L499.2,448.6 L498.6,447.7 L498.0,446.8 L497.5,445.9 L497.0,444.9 L496.6,443.9 L496.2,442.9 L495.9,441.8 L495.6,440.7 L495.4,439.5 L495.2,438.1 L495.0,436.5 L494.8,434.8 L494.8,433.1 L494.7,431.3 L494.8,429.5 L494.8,427.8 L495.0,426.1 L495.2,424.6 L495.4,423.1 L495.7,421.9 L496.1,420.6 L496.6,419.3 L497.1,418.0 L497.6,416.8 L498.2,415.6 L498.9,414.5 L499.5,413.4 L500.3,412.5 L501.0,411.6 L501.8,410.8 L502.5,410.1 L503.3,409.5 L504.2,408.9 L505.2,408.3 L506.4,407.7 L507.6,407.1 L508.9,406.5 L510.3,406.0 L511.7,405.5 L513.2,405.1 L514.6,404.8 L516.0,404.6 L517.3,404.5 L518.5,404.4 L519.7,404.4 L521.1,404.6 L522.5,404.7 L524.0,405.0 L525.5,405.3 L527.0,405.7 L528.6,406.2 L530.1,406.8 L531.5,407.4 L532.9,408.0 L534.2,408.7 L535.4,409.5 L536.7,410.3 L538.0,411.2 L539.3,412.2 L540.6,413.2 L541.7,414.2 L542.8,415.3 L543.8,416.4 L544.8,417.5 L545.6,418.7 L546.4,419.9 L547.0,421.1 L547.6,422.4 L548.2,424.0 L548.8,425.8 L549.3,427.9 L549.8,430.1 L550.2,432.4 L550.5,434.7 L550.8,437.2 L550.9,439.6 L551.0,441.9 L551.0,444.2 L550.9,446.4 L550.7,448.4 L550.4,450.5 L549.9,452.7 L549.4,455.0 L548.7,457.3 L548.0,459.6 L547.1,461.8 L546.2,463.9 L545.2,466.0 L544.2,467.8 L543.1,469.5 L542.0,471.0 L540.9,472.3 L539.8,473.5 L538.4,474.6 L537.0,475.7 L535.4,476.7 L533.6,477.7 L531.7,478.7 L529.6,479.7 L527.5,480.7 L525.2,481.6 L522.7,482.5 L520.2,483.3 L517.7,484.1 L515.2,484.8 L512.6,485.4 L509.7,485.9 L506.7,486.3 L503.6,486.7 L500.3,487.0 L496.9,487.2 L493.5,487.5 L490.0,487.7 L486.5,488.0 L483.0,488.3 L479.5,488.6 L476.2,488.9 L472.9,489.2 L469.5,489.5 L466.2,489.9 L462.8,490.3 L459.4,490.7 L456.0,491.0 L452.6,491.4 L449.3,491.8 L446.0,492.2 L442.7,492.7 L439.5,493.2 L436.3,493.7 L432.9,494.2 L429.5,494.8 L426.1,495.5 L422.7,496.1 L419.5,496.7 L416.3,497.4 L413.4,498.0 L410.7,498.5 L408.3,499.1 L406.3,499.6 L404.6,500.0Z" fill="#b8b460" filter="url(#L2)"/><circle cx="513" cy="434.5" r="18" fill="#b8b460" filter="url(#L2)"/><circle cx="455.5" cy="447.4" r="9.8" fill="url(#gg)" filter="url(#L1)"/><circle cx="472.8" cy="442" r="9.8" fill="url(#gg)" filter="url(#L1)"/><circle cx="482.9" cy="456.5" r="9.8" fill="url(#gg)" filter="url(#L1)"/><circle cx="465.5" cy="463" r="9.8" fill="url(#gg)" filter="url(#L1)"/><circle cx="481" cy="476.6" r="9.8" fill="url(#gg)" filter="url(#L1)"/><circle cx="463.7" cy="484.8" r="9.8" fill="url(#gg)" filter="url(#L1)"/><path d="M938.0,416.0C935.8,417.4,929.2,421.1,926.0,424.0C922.8,426.9,920.7,427.7,920.0,432.0C919.3,436.3,919.8,441.9,922.0,448.0C924.2,454.1,928.0,461.3,932.0,466.0C936.0,470.7,940.4,472.2,944.0,474.0C947.6,475.8,950.6,475.6,952.0,476.0" fill="none" stroke="#b8b460" stroke-width="6.5" stroke-linecap="round" filter="url(#L1)"/><circle cx="934.2" cy="422" r="5.5" fill="none" stroke="#b8b460" stroke-width="5" filter="url(#L1)"/><path d="M918.0,448.0C916.2,445.8,912.7,439.2,908.0,436.0C903.3,432.8,898.1,430.0,892.0,430.0C885.9,430.0,878.3,432.9,874.0,436.0C869.7,439.1,868.2,443.8,868.0,447.0C867.8,450.2,871.0,453.3,873.0,454.0C875.0,454.7,877.9,451.5,879.0,451.0" fill="none" stroke="#b8b460" stroke-width="6.5" stroke-linecap="round" filter="url(#L1)"/><circle cx="913.0" cy="473" r="7" fill="none" stroke="#b8b460" stroke-width="6" filter="url(#L1)"/><path d="M963.0,430.0C962.1,426.4,961.4,415.4,958.0,410.0C954.6,404.6,949.2,402.2,944.0,400.0C938.8,397.8,934.0,397.6,929.0,398.0C924.0,398.4,918.3,401.3,916.0,402.0" fill="none" stroke="#b8b460" stroke-width="6.5" stroke-linecap="round" filter="url(#L1)"/><path d="M1025.0,442.0C1024.3,436.6,1024.6,421.0,1021.0,412.0C1017.4,403.0,1013.5,397.8,1005.0,392.0C996.5,386.2,985.0,382.2,974.0,380.0C963.0,377.8,953.4,378.6,944.0,380.0C934.6,381.4,926.0,386.6,922.0,388.0" fill="none" stroke="#b8b460" stroke-width="11" stroke-linecap="round" filter="url(#L1)"/><path d="M1008.0,442.0C1007.5,437.7,1008.2,425.9,1005.0,418.0C1001.8,410.1,996.8,403.0,990.0,398.0C983.2,393.0,975.6,391.4,967.0,390.0C958.4,388.6,946.5,390.0,942.0,390.0" fill="none" stroke="#b8b460" stroke-width="9" stroke-linecap="round" filter="url(#L1)"/><path d="M1072.0,432.0C1068.8,427.7,1061.7,415.6,1054.0,408.0C1046.3,400.4,1038.9,395.0,1029.0,390.0C1019.1,385.0,1009.8,382.7,999.0,380.0C988.2,377.3,978.9,375.9,969.0,375.0C959.1,374.1,953.9,373.2,944.0,375.0C934.1,376.8,924.8,379.6,914.0,385.0C903.2,390.4,893.0,396.9,884.0,405.0C875.0,413.1,871.2,420.1,864.0,430.0C856.8,439.9,852.1,451.4,844.0,460.0C835.9,468.6,829.8,471.9,819.0,478.0C808.2,484.1,790.3,491.1,784.0,494.0" fill="none" stroke="#b8b460" stroke-width="11" stroke-linecap="round" filter="url(#L1b)"/><path d="M783.0,432.0C782.5,437.9,783.1,454.6,780.0,465.0C776.9,475.4,772.5,483.7,766.0,490.0C759.5,496.3,752.5,497.8,744.0,500.0C735.5,502.2,723.5,501.6,719.0,502.0" fill="none" stroke="#b8b460" stroke-width="10.5" stroke-linecap="round" filter="url(#L1)"/><path d="M786.0,428.0C782.4,426.9,772.8,422.4,766.0,422.0C759.2,421.6,753.8,423.5,748.0,426.0C742.2,428.5,736.5,434.2,734.0,436.0" fill="none" stroke="#b8b460" stroke-width="4.5" stroke-linecap="round" filter="url(#L1)"/><path d="M1120.7,459.8C1120.2,456.5,1119.7,452.1,1118.0,449.2C1116.3,446.3,1113.8,445.1,1111.4,443.9C1109.0,442.7,1105.7,444.0,1104.7,442.6C1103.7,441.2,1106.7,437.5,1106.0,436.0C1105.3,434.5,1103.4,434.1,1100.8,434.0C1098.2,433.9,1094.8,434.9,1091.5,435.3C1088.2,435.7,1083.9,437.3,1082.2,436.0C1080.5,434.7,1083.4,430.1,1082.2,428.0C1081.0,425.9,1078.4,425.3,1075.5,424.6C1072.6,423.9,1070.2,424.8,1066.2,424.0C1062.1,423.2,1056.8,420.0,1053.0,420.0C1049.2,420.0,1046.9,421.1,1045.0,424.0C1043.1,426.9,1043.1,431.9,1042.4,436.0C1041.7,440.1,1041.5,442.7,1041.0,446.5C1040.5,450.3,1040.2,453.4,1039.7,457.2C1039.2,461.0,1038.4,464.5,1038.4,467.8C1038.4,471.1,1040.0,472.9,1039.7,475.8C1039.4,478.7,1038.9,482.5,1037.0,483.7C1035.1,484.9,1032.4,481.4,1029.1,482.4C1025.8,483.4,1020.9,485.9,1018.5,489.0C1016.1,492.1,1015.3,495.8,1015.8,499.6C1016.3,503.4,1018.7,507.2,1021.1,510.3C1023.5,513.4,1025.3,515.5,1029.1,516.9C1032.9,518.3,1037.6,518.4,1042.4,518.2C1047.2,518.0,1050.8,517.0,1055.6,515.6C1060.4,514.2,1064.6,512.7,1068.9,510.3C1073.2,507.9,1075.9,506.1,1079.5,502.3C1083.1,498.5,1086.6,493.3,1088.8,489.0C1091.0,484.7,1089.1,481.0,1091.5,478.4C1093.9,475.8,1098.0,473.9,1102.1,474.4C1106.1,474.9,1110.9,480.7,1114.0,481.0C1117.1,481.3,1118.1,478.2,1119.3,475.8C1120.5,473.4,1120.4,470.7,1120.7,467.8C1121.0,464.9,1121.2,463.1,1120.7,459.8Z" fill="#b8b460" filter="url(#L3)"/><path d="M1098.0,476.0C1099.3,477.8,1104.3,482.4,1105.5,486.0C1106.7,489.6,1106.0,493.8,1104.5,496.0C1103.0,498.2,1098.6,498.7,1097.0,498.0C1095.4,497.3,1095.8,493.1,1095.5,492.0" fill="none" stroke="#b8b460" stroke-width="6.5" stroke-linecap="round" filter="url(#L1)"/><path d="M1120.5,461.0C1119.8,456.3,1117.0,451.4,1114.0,448.0C1111.0,444.6,1107.6,444.0,1104.0,442.0C1100.4,440.0,1098.0,438.8,1094.0,437.0C1090.0,435.2,1087.0,434.2,1082.0,432.0C1077.0,429.8,1071.4,427.0,1066.0,425.0C1060.6,423.0,1056.3,421.0,1052.0,421.0C1047.7,421.0,1042.5,422.5,1042.0,425.0C1041.5,427.5,1045.0,431.8,1049.0,435.0C1053.0,438.2,1058.6,439.9,1064.0,443.0C1069.4,446.1,1073.2,448.6,1079.0,452.0C1084.8,455.4,1090.6,458.8,1096.0,462.0C1101.4,465.2,1105.0,467.8,1109.0,470.0C1113.0,472.2,1115.9,475.6,1118.0,474.0C1120.1,472.4,1121.2,465.7,1120.5,461.0Z" fill="#b8b460" filter="url(#L2)"/><path d="M1042.0,428.0C1044.7,428.0,1049.1,435.1,1054.0,440.0C1058.9,444.9,1063.6,449.6,1069.0,455.0C1074.4,460.4,1080.0,464.6,1084.0,470.0C1088.0,475.4,1090.3,481.0,1091.0,485.0C1091.7,489.0,1090.7,492.2,1088.0,492.0C1085.3,491.8,1080.7,488.0,1076.0,484.0C1071.3,480.0,1066.9,475.2,1062.0,470.0C1057.1,464.8,1053.1,460.4,1049.0,455.0C1044.9,449.6,1040.3,444.9,1039.0,440.0C1037.7,435.1,1039.3,428.0,1042.0,428.0Z" fill="#b8b460" filter="url(#L2)"/><path d="M1040.0,435.0C1042.2,436.8,1045.6,447.8,1049.0,455.0C1052.4,462.2,1055.8,467.8,1059.0,475.0C1062.2,482.2,1065.7,489.1,1067.0,495.0C1068.3,500.9,1068.0,507.1,1066.0,508.0C1064.0,508.9,1059.4,504.7,1056.0,500.0C1052.6,495.3,1049.9,488.8,1047.0,482.0C1044.1,475.2,1041.8,468.7,1040.0,462.0C1038.2,455.3,1037.0,449.9,1037.0,445.0C1037.0,440.1,1037.8,433.2,1040.0,435.0Z" fill="#b8b460" filter="url(#L2)"/><path d="M1038.0,440.0C1039.1,441.8,1039.3,456.0,1040.0,465.0C1040.7,474.0,1041.3,481.9,1042.0,490.0C1042.7,498.1,1044.5,505.1,1044.0,510.0C1043.5,514.9,1041.2,517.9,1039.0,517.0C1036.8,516.1,1033.4,511.7,1032.0,505.0C1030.6,498.3,1030.6,489.0,1031.0,480.0C1031.4,471.0,1032.7,462.2,1034.0,455.0C1035.3,447.8,1036.9,438.2,1038.0,440.0Z" fill="#b8b460" filter="url(#L2)"/><path d="M1038.0,488.0C1038.0,485.5,1031.4,483.6,1028.0,484.0C1024.6,484.4,1021.2,487.1,1019.0,490.0C1016.8,492.9,1015.6,496.4,1016.0,500.0C1016.4,503.6,1018.3,506.9,1021.0,510.0C1023.7,513.1,1027.2,515.7,1031.0,517.0C1034.8,518.3,1041.5,518.8,1042.0,517.0C1042.5,515.2,1036.5,510.4,1034.0,507.0C1031.5,503.6,1027.3,501.4,1028.0,498.0C1028.7,494.6,1038.0,490.5,1038.0,488.0Z" fill="#b8b460" filter="url(#L2)"/><path d="M1092.7,397.7C1091.1,396.1,1085.5,393.3,1083.0,391.2C1080.5,389.1,1081.1,387.3,1079.0,386.0C1076.9,384.7,1072.1,385.4,1071.2,384.0C1070.3,382.6,1074.3,379.9,1073.8,378.2C1073.3,376.5,1071.2,375.2,1068.6,374.3C1066.0,373.4,1062.1,373.1,1059.5,373.0C1056.9,372.9,1055.7,374.3,1054.3,373.6C1052.9,372.9,1053.1,370.2,1051.7,369.0C1050.3,367.8,1048.6,366.9,1046.5,367.1C1044.4,367.3,1042.3,368.3,1040.0,370.3C1037.7,372.3,1036.5,376.7,1033.5,378.2C1030.5,379.7,1027.1,379.0,1023.1,378.8C1019.1,378.6,1015.2,377.7,1011.4,376.9C1007.6,376.1,1004.1,373.0,1002.0,374.3C999.9,375.6,997.8,381.4,1000.0,384.0C1002.2,386.6,1008.4,386.5,1014.0,389.0C1019.6,391.5,1025.6,396.1,1031.0,397.7C1036.4,399.3,1039.8,396.8,1044.0,397.7C1048.2,398.6,1050.6,401.3,1054.3,402.9C1058.0,404.5,1061.0,405.9,1064.7,406.8C1068.4,407.7,1071.3,408.3,1075.1,408.1C1078.9,407.9,1082.6,406.9,1085.6,405.5C1088.6,404.1,1090.7,401.7,1092.0,400.3C1093.3,398.9,1094.3,399.3,1092.7,397.7Z" fill="#b8b460" filter="url(#L2)"/><path d="M1089.0,400.0C1084.5,398.7,1073.9,395.5,1064.0,393.0C1054.1,390.5,1044.8,388.3,1034.0,386.0C1023.2,383.7,1009.4,381.1,1004.0,380.0" fill="none" stroke="#4a4820" stroke-width="1.1" stroke-linecap="round" opacity="0.75"/><path d="M1016.8,347.6C1016.3,345.0,1013.0,345.3,1011.0,345.6C1009.0,345.9,1007.7,349.6,1005.8,349.5C1003.9,349.4,1003.2,345.9,1000.6,345.0C998.0,344.1,993.5,345.1,991.4,344.3C989.3,343.5,990.4,340.6,988.8,340.4C987.2,340.2,984.6,341.1,982.3,343.0C980.0,344.9,978.1,350.0,975.8,350.8C973.5,351.6,971.6,347.8,969.3,347.6C967.0,347.4,964.4,347.3,962.8,349.5C961.2,351.7,962.8,356.7,960.2,360.0C957.6,363.3,951.1,365.3,948.5,367.8C945.9,370.3,942.3,372.9,946.0,374.0C949.7,375.1,960.4,373.5,969.0,374.0C977.6,374.5,987.2,377.9,994.0,377.0C1000.8,376.1,1003.5,372.1,1007.0,369.0C1010.5,365.9,1011.8,363.9,1013.6,360.0C1015.4,356.1,1017.3,350.2,1016.8,347.6Z" fill="#b8b460" filter="url(#L2)"/><path d="M1009.0,352.0C1006.3,353.8,1001.2,359.1,994.0,362.0C986.8,364.9,977.1,366.2,969.0,368.0C960.9,369.8,952.6,371.3,949.0,372.0" fill="none" stroke="#4a4820" stroke-width="1.1" stroke-linecap="round" opacity="0.75"/><path d="M948.5,344.3C946.7,341.7,941.3,343.7,938.0,345.6C934.7,347.5,933.1,352.8,930.2,354.7C927.4,356.6,925.5,356.0,922.4,356.0C919.3,356.0,916.6,354.0,913.3,354.7C910.0,355.4,907.7,357.4,904.2,360.0C900.7,362.6,896.8,366.7,893.8,369.0C890.8,371.3,888.9,370.7,887.3,373.0C885.7,375.3,885.7,378.9,884.7,382.0C883.7,385.1,883.9,386.2,882.0,390.0C880.1,393.8,875.8,398.7,874.0,403.0C872.2,407.3,868.4,412.7,872.0,414.0C875.6,415.3,887.7,411.5,894.0,410.0C900.3,408.5,900.0,407.2,907.0,405.5C914.0,403.8,926.9,402.9,933.0,400.3C939.1,397.7,940.2,394.0,940.7,391.2C941.2,388.4,935.5,388.0,936.0,384.7C936.5,381.4,941.1,377.4,943.3,373.0C945.5,368.6,947.1,365.2,948.0,360.0C948.9,354.8,950.3,346.9,948.5,344.3Z" fill="#b8b460" filter="url(#L3)"/><path d="M942.0,352.0C938.8,355.6,930.8,364.8,924.0,372.0C917.2,379.2,912.6,385.2,904.0,392.0C895.4,398.8,881.0,406.8,876.0,410.0" fill="none" stroke="#4a4820" stroke-width="1.1" stroke-linecap="round" opacity="0.75"/><path d="M889.0,371.9C887.6,367.2,883.5,372.1,881.2,371.9C878.9,371.7,877.7,369.9,876.0,370.6C874.3,371.3,872.2,380.0,872.0,375.8C871.8,371.6,875.4,352.4,874.7,347.1C874.0,341.8,871.2,345.6,868.2,346.5C865.2,347.4,860.8,353.6,857.8,352.3C854.8,351.0,854.1,342.8,851.3,339.3C848.5,335.8,845.6,334.4,842.1,332.8C838.6,331.2,835.4,330.2,831.7,330.2C828.0,330.2,825.0,331.9,821.3,332.8C817.6,333.7,814.6,335.7,810.9,335.4C807.2,335.1,802.6,330.4,800.5,330.9C798.4,331.4,798.3,335.3,799.2,338.0C800.1,340.7,802.7,343.7,805.7,345.8C808.7,347.9,813.1,349.0,816.1,349.7C819.1,350.4,821.7,347.6,822.6,349.7C823.5,351.8,823.2,359.3,821.3,361.4C819.4,363.5,814.5,359.0,812.2,361.4C809.9,363.8,809.9,371.4,808.3,374.5C806.7,377.6,804.7,377.0,803.1,378.4C801.5,379.8,800.6,379.0,799.2,382.3C797.8,385.6,796.9,391.5,795.3,396.6C793.7,401.7,791.3,406.9,790.1,410.9C788.9,414.9,784.5,417.4,788.8,418.7C793.1,420.0,804.1,419.2,814.0,418.0C823.9,416.8,834.1,412.7,844.0,412.0C853.9,411.3,862.3,415.6,869.0,414.0C875.7,412.4,877.6,406.0,881.2,403.1C884.8,400.2,887.6,403.5,889.0,397.9C890.4,392.3,890.4,376.6,889.0,371.9Z" fill="#b8b460" filter="url(#L3)"/><path d="M881.2,372.0C880.7,364.3,879.2,359.5,878.0,355.0C876.8,350.5,876.5,348.5,874.7,347.0C872.9,345.5,870.3,344.9,868.0,346.5C865.7,348.1,864.0,350.9,862.0,356.0C860.0,361.1,858.4,367.4,857.0,375.0C855.6,382.6,853.6,391.3,854.0,398.0C854.4,404.7,855.8,409.5,859.0,412.0C862.2,414.5,868.0,414.5,872.0,412.0C876.0,409.5,879.3,405.2,881.0,398.0C882.7,390.8,881.7,379.7,881.2,372.0Z" fill="#b8b460" filter="url(#L2)"/><path d="M808.3,374.5C807.1,372.4,804.7,377.0,803.1,378.4C801.5,379.8,800.6,379.0,799.2,382.3C797.8,385.6,796.9,391.5,795.3,396.6C793.7,401.7,791.3,406.9,790.1,410.9C788.9,414.9,786.3,417.4,788.8,418.7C791.3,420.0,800.0,420.5,804.0,418.0C808.0,415.5,809.9,410.0,811.0,405.0C812.1,400.0,810.5,395.5,810.0,390.0C809.5,384.5,809.5,376.6,808.3,374.5Z" fill="#b8b460" filter="url(#L2)"/><path d="M823.0,350.0C822.2,349.9,823.2,359.3,821.3,361.4C819.4,363.5,814.5,359.0,812.2,361.4C809.9,363.8,808.5,368.5,808.3,374.5C808.1,380.5,809.3,388.2,811.0,395.0C812.7,401.8,814.4,408.9,818.0,412.0C821.6,415.1,829.0,416.9,831.0,412.0C833.0,407.1,829.9,394.0,829.0,385.0C828.1,376.0,827.1,368.3,826.0,362.0C824.9,355.7,823.8,350.1,823.0,350.0Z" fill="#b8b460" filter="url(#L2)"/><path d="M858.0,352.0C857.2,342.9,854.2,342.8,851.3,339.3C848.4,335.8,845.5,334.4,842.0,332.8C838.5,331.2,835.8,330.2,832.0,330.2C828.2,330.2,824.8,331.9,821.0,332.8C817.2,333.7,814.7,335.7,811.0,335.4C807.3,335.1,802.6,330.4,800.5,330.9C798.4,331.4,798.2,335.3,799.2,338.0C800.2,340.7,803.0,343.7,806.0,345.8C809.0,347.9,812.9,348.9,816.0,349.7C819.1,350.5,820.7,348.1,823.0,350.0C825.3,351.9,827.4,353.7,829.0,360.0C830.6,366.3,830.7,376.0,832.0,385.0C833.3,394.0,832.9,405.1,836.0,410.0C839.1,414.9,845.4,415.6,849.0,412.0C852.6,408.4,854.4,400.8,856.0,390.0C857.6,379.2,858.8,361.1,858.0,352.0Z" fill="#b8b460" filter="url(#L2)"/><path d="M794.0,364.3C790.9,359.7,783.8,355.7,780.5,354.2C777.2,352.7,778.8,357.6,775.4,355.9C772.0,354.2,765.0,346.1,761.8,344.9C758.6,343.7,760.3,350.2,757.6,349.1C754.9,348.0,750.7,340.9,746.6,338.9C742.5,336.9,736.8,340.4,734.8,338.0C732.8,335.6,737.1,329.2,735.6,325.4C734.1,321.6,728.6,317.5,726.3,316.9C724.0,316.3,723.8,318.9,722.9,322.0C722.0,325.1,722.7,329.9,721.2,333.9C719.7,337.9,715.3,339.1,714.4,344.0C713.5,348.9,714.6,356.3,716.1,360.9C717.6,365.5,722.0,365.7,722.9,369.4C723.8,373.1,720.6,377.9,721.2,381.2C721.8,384.5,723.3,385.2,726.3,388.0C729.3,390.8,736.3,393.8,738.1,396.5C739.9,399.2,735.0,400.8,736.5,403.2C738.0,405.6,743.3,407.9,746.6,410.0C749.9,412.1,753.0,413.0,755.1,415.1C757.2,417.2,754.5,420.1,758.5,421.9C762.5,423.7,770.7,424.7,777.1,425.3C783.5,425.9,789.9,429.9,794.0,425.3C798.1,420.7,799.3,408.2,800.0,400.0C800.7,391.8,799.1,386.4,798.0,380.0C796.9,373.6,797.1,368.9,794.0,364.3Z" fill="#b8b460" filter="url(#L3)"/><path d="M780.5,354.2C778.1,352.6,777.5,354.0,775.4,355.9C773.3,357.8,769.3,359.8,769.0,365.0C768.7,370.2,771.3,378.7,774.0,385.0C776.7,391.3,780.4,396.4,784.0,400.0C787.6,403.6,791.8,407.7,794.0,405.0C796.2,402.3,796.9,392.2,796.0,385.0C795.1,377.8,791.8,370.5,789.0,365.0C786.2,359.5,782.9,355.8,780.5,354.2Z" fill="#b8b460" filter="url(#L2)"/><path d="M762.0,345.0C759.8,342.1,760.4,350.2,757.6,349.1C754.8,348.0,750.7,340.9,746.6,338.9C742.5,336.9,736.9,336.0,735.0,338.0C733.1,340.0,734.4,345.1,736.0,350.0C737.6,354.9,740.4,359.6,744.0,365.0C747.6,370.4,751.5,375.1,756.0,380.0C760.5,384.9,765.4,391.1,769.0,392.0C772.6,392.9,775.8,389.9,776.0,385.0C776.2,380.1,772.5,372.2,770.0,365.0C767.5,357.8,764.2,347.9,762.0,345.0Z" fill="#b8b460" filter="url(#L2)"/><path d="M746.6,410.0C745.9,411.8,753.0,413.0,755.1,415.1C757.2,417.2,754.5,420.1,758.5,421.9C762.5,423.7,771.6,425.6,777.1,425.3C782.6,425.0,789.6,422.8,789.0,420.0C788.4,417.2,779.4,412.7,774.0,410.0C768.6,407.3,763.9,405.0,759.0,405.0C754.1,405.0,747.3,408.2,746.6,410.0Z" fill="#b8b460" filter="url(#L2)"/><path d="M722.9,369.4C720.2,370.0,720.6,377.9,721.2,381.2C721.8,384.5,723.3,385.2,726.3,388.0C729.3,390.8,736.3,393.8,738.1,396.5C739.9,399.2,735.0,400.8,736.5,403.2C738.0,405.6,742.6,408.4,746.6,410.0C750.7,411.6,755.9,413.4,759.0,412.0C762.1,410.6,765.3,406.0,764.0,402.0C762.7,398.0,757.0,394.3,752.0,390.0C747.0,385.7,741.2,381.7,736.0,378.0C730.8,374.3,725.6,368.8,722.9,369.4Z" fill="#b8b460" filter="url(#L2)"/><path d="M735.6,325.4C734.0,321.6,728.6,317.5,726.3,316.9C724.0,316.3,723.8,318.9,722.9,322.0C722.0,325.1,722.7,329.9,721.2,333.9C719.7,337.9,715.3,339.1,714.4,344.0C713.5,348.9,714.6,356.4,716.1,360.9C717.6,365.4,720.1,367.0,723.0,369.0C725.9,371.0,728.2,370.9,732.0,372.0C735.8,373.1,740.4,375.4,744.0,375.0C747.6,374.6,752.0,373.6,752.0,370.0C752.0,366.4,747.1,360.8,744.0,355.0C740.9,349.2,736.5,343.3,735.0,338.0C733.5,332.7,737.2,329.2,735.6,325.4Z" fill="#b8b460" filter="url(#L2)"/><path d="M872.3,419.0C871.1,415.9,866.7,415.4,862.7,414.3C858.7,413.2,854.6,413.8,850.0,412.7C845.4,411.6,841.9,408.6,837.3,408.0C832.7,407.4,828.0,408.4,824.6,409.5C821.2,410.6,820.6,412.9,818.3,414.3C816.0,415.7,814.8,417.2,811.9,417.5C809.0,417.8,806.4,416.8,802.4,415.9C798.4,415.0,792.0,411.3,789.7,412.7C787.4,414.1,788.0,420.7,789.7,423.8C791.4,426.9,797.2,427.3,799.2,430.2C801.2,433.1,799.4,435.7,800.8,439.7C802.2,443.7,805.1,448.1,807.1,452.4C809.1,456.7,812.5,459.3,811.9,463.6C811.3,467.9,807.4,472.9,804.0,476.3C800.6,479.7,797.1,480.3,792.8,482.6C788.5,484.9,785.3,486.8,780.1,489.0C774.9,491.2,770.5,493.0,764.0,495.0C757.5,497.0,747.6,496.9,744.0,500.0C740.4,503.1,739.5,510.0,744.0,512.0C748.5,514.0,759.6,511.9,769.0,511.2C778.4,510.5,787.7,509.1,796.0,508.0C804.3,506.9,807.7,504.6,815.1,504.9C822.5,505.2,829.9,507.3,837.3,509.6C844.7,511.9,850.1,516.7,856.4,517.6C862.7,518.5,866.0,515.0,872.3,514.4C878.6,513.8,884.4,515.0,891.3,514.4C898.2,513.8,904.1,512.4,910.4,511.2C916.7,510.0,922.3,510.9,926.3,508.0C930.3,505.1,932.3,499.6,932.6,495.3C932.9,491.0,930.3,485.9,928.0,484.2C925.7,482.5,922.3,483.8,920.0,485.8C917.7,487.8,918.6,494.7,915.2,495.3C911.8,495.9,903.8,493.0,900.9,489.0C898.0,485.0,901.9,477.1,899.3,473.1C896.7,469.1,890.9,469.3,886.6,466.7C882.3,464.1,879.7,459.4,875.4,458.8C871.1,458.2,867.6,462.2,862.7,463.6C857.8,465.0,849.0,470.1,848.4,466.7C847.8,463.3,855.9,450.8,859.6,444.5C863.3,438.2,866.8,436.4,869.1,431.8C871.4,427.2,873.5,422.1,872.3,419.0Z" fill="#b8b460" filter="url(#L3)"/><path d="M864.0,425.0C860.4,428.6,851.2,437.8,844.0,445.0C836.8,452.2,833.0,456.9,824.0,465.0C815.0,473.1,804.8,483.3,794.0,490.0C783.2,496.7,769.4,499.8,764.0,502.0" fill="none" stroke="#4a4820" stroke-width="1.1" stroke-linecap="round" opacity="0.75"/><path d="M914.0,500.0C906.8,498.2,888.4,492.2,874.0,490.0C859.6,487.8,848.4,486.2,834.0,488.0C819.6,489.8,801.2,497.8,794.0,500.0" fill="none" stroke="#4a4820" stroke-width="1.1" stroke-linecap="round" opacity="0.75"/><path d="M884.0,470.0C878.6,471.8,865.7,475.5,854.0,480.0C842.3,484.5,825.3,492.3,819.0,495.0" fill="none" stroke="#4a4820" stroke-width="1" stroke-linecap="round" opacity="0.75"/><circle cx="985.2" cy="425.3" r="11.8" fill="url(#gg)" filter="url(#L1)"/><circle cx="966.7" cy="435.8" r="11.8" fill="url(#gg)" filter="url(#L1)"/><circle cx="1003.6" cy="438.4" r="11.8" fill="url(#gg)" filter="url(#L1)"/><circle cx="982.5" cy="449" r="11.8" fill="url(#gg)" filter="url(#L1)"/><circle cx="964.1" cy="454.2" r="11.8" fill="url(#gg)" filter="url(#L1)"/><circle cx="1016.7" cy="454.2" r="11.8" fill="url(#gg)" filter="url(#L1)"/><circle cx="995.7" cy="464.7" r="11.8" fill="url(#gg)" filter="url(#L1)"/><circle cx="974.6" cy="470" r="11.8" fill="url(#gg)" filter="url(#L1)"/><circle cx="953.6" cy="467.4" r="11.8" fill="url(#gg)" filter="url(#L1)"/><circle cx="1014.1" cy="475.3" r="11.8" fill="url(#gg)" filter="url(#L1)"/><circle cx="990.4" cy="483.2" r="11.8" fill="url(#gg)" filter="url(#L1)"/><circle cx="969.4" cy="488.4" r="11.8" fill="url(#gg)" filter="url(#L1)"/><circle cx="951.0" cy="488.4" r="11.8" fill="url(#gg)" filter="url(#L1)"/><circle cx="1006.2" cy="493.7" r="11.8" fill="url(#gg)" filter="url(#L1)"/><circle cx="987.8" cy="501.6" r="11.8" fill="url(#gg)" filter="url(#L1)"/><circle cx="969.4" cy="501.6" r="11.8" fill="url(#gg)" filter="url(#L1)"/><circle cx="951.0" cy="504.2" r="11.8" fill="url(#gg)" filter="url(#L1)"/><path d="M707.0,350.0C694.0,345.0,679.0,330.0,664.0,320.0C649.0,316.0,639.0,330.0,629.0,360.0C622.0,385.0,616.0,405.0,609.0,418.0L642.0,420.0C659.0,395.0,679.0,372.0,700.0,364.0Z" fill="#b8b460" filter="url(#L2)"/><path d="M714.5,353.0C714.5,343.0,707.0,339.5,698.0,341.5C674.0,348.0,650.0,377.0,630.0,417.0L643.0,420.0C658.0,397.0,678.0,377.0,700.0,368.0C709.0,365.0,714.5,361.0,714.5,353.0Z" fill="#b8b460" filter="url(#L2)"/><path d="M697.5,334.0C696.5,324.5,686.0,322.0,677.0,326.5C654.0,341.0,633.0,380.0,617.0,417.0L634.0,419.0C648.0,392.0,667.0,362.0,689.0,345.0C695.0,341.0,697.5,338.0,697.5,334.0Z" fill="#b8b460" filter="url(#L2)"/><path d="M672.5,323.0C671.5,313.0,660.0,310.5,651.0,316.0C637.0,333.0,621.0,378.0,608.0,417.0L625.0,418.0C636.0,388.0,653.0,354.0,667.0,335.0C671.0,330.0,672.5,327.0,672.5,323.0Z" fill="#b8b460" filter="url(#L2)"/><path d="M808.6,506.0L806.9,506.0L804.8,506.0L802.4,505.9L799.6,505.8L796.6,505.7L793.5,505.5L790.2,505.4L786.8,505.2L783.4,505.1L780.0,505.0L776.7,504.9L773.5,504.8L770.4,504.8L767.2,504.9L764.0,504.9L760.7,505.0L757.4,505.1L754.0,505.2L750.6,505.3L747.2,505.4L743.8,505.5L740.3,505.5L736.9,505.5L733.5,505.4L730.2,505.4L726.9,505.4L723.5,505.4L720.0,505.5L716.5,505.5L712.9,505.5L709.3,505.5L705.8,505.4L702.2,505.2L698.6,504.9L695.1,504.5L691.7,503.9L688.5,503.2L685.4,502.5L682.4,501.7L679.3,500.8L676.3,499.8L673.3,498.7L670.4,497.3L667.5,495.8L664.7,494.1L662.0,492.2L659.4,490.0L656.9,487.7L654.6,485.1L652.5,482.4L650.7,479.5L648.9,476.6L647.4,473.5L646.0,470.4L644.8,467.3L643.7,464.2L642.7,461.0L641.9,457.9L641.2,454.7L640.7,451.6L640.3,448.4L640.1,445.0L640.0,441.7L640.1,438.4L640.4,435.0L640.8,431.8L641.3,428.5L641.9,425.4L642.7,422.3L643.5,419.3L644.5,416.4L645.6,413.6L646.9,410.9L648.4,408.2L650.0,405.8L651.7,403.5L653.6,401.4L655.5,399.5L657.4,397.7L659.4,396.0L661.4,394.5L663.4,393.1L665.4,391.8L667.4,390.5L669.6,389.4L671.9,388.3L674.3,387.3L676.7,386.4L679.1,385.7L681.5,385.0L684.0,384.5L686.5,384.0L689.0,383.7L691.5,383.6L694.0,383.5L696.5,383.6L699.0,383.8L701.5,384.2L703.9,384.7L706.3,385.4L708.6,386.2L710.9,387.0L713.2,388.0L715.4,389.1L717.5,390.3L719.5,391.6L721.5,393.0L723.3,394.5L725.0,396.2L726.6,397.9L728.1,399.8L729.4,401.7L730.6,403.6L731.6,405.6L732.6,407.7L733.4,409.7L734.1,411.8L734.8,413.9L735.3,416.0L735.7,418.1L736.1,420.4L736.3,422.7L736.4,425.1L736.5,427.5L736.4,429.8L736.2,432.2L736.0,434.5L735.7,436.8L735.3,439.0L734.8,441.2L734.2,443.3L733.6,445.3L732.9,447.2L732.0,449.1L731.1,450.8L730.0,452.5L728.9,454.1L727.8,455.6L726.6,457.0L725.3,458.3L724.0,459.5L722.7,460.6L721.3,461.6L719.9,462.5L718.4,463.4L716.9,464.2L715.3,464.9L713.6,465.4L712.0,465.8L710.3,466.1L708.7,466.4L707.0,466.5L705.4,466.6L703.8,466.5L702.2,466.4L700.6,466.2L698.8,465.8L697.0,465.3L695.3,464.6L693.7,463.8L692.2,463.0L690.7,462.2L689.3,461.4L688.0,460.6L686.9,459.8L685.9,459.2L685.2,458.6L684.6,458.2L687.4,451.8L688.3,452.0L689.3,452.4L690.5,452.8L691.7,453.3L693.1,453.8L694.4,454.3L695.8,454.8L697.2,455.2L698.5,455.5L699.6,455.8L700.6,455.8L701.4,455.8L702.3,455.7L703.3,455.5L704.3,455.3L705.3,455.1L706.3,454.7L707.3,454.4L708.2,454.0L709.1,453.5L709.9,453.0L710.7,452.5L711.4,452.0L712.1,451.5L712.7,450.8L713.4,450.1L714.1,449.4L714.8,448.6L715.4,447.7L716.0,446.8L716.5,445.9L717.0,444.9L717.4,443.9L717.8,442.9L718.1,441.8L718.4,440.7L718.6,439.5L718.8,438.1L719.0,436.5L719.2,434.8L719.2,433.1L719.3,431.3L719.2,429.5L719.2,427.8L719.0,426.1L718.8,424.6L718.6,423.1L718.3,421.9L717.9,420.6L717.4,419.3L716.9,418.0L716.4,416.8L715.8,415.6L715.1,414.5L714.5,413.4L713.7,412.5L713.0,411.6L712.2,410.8L711.5,410.1L710.7,409.5L709.8,408.9L708.8,408.3L707.6,407.7L706.4,407.1L705.1,406.5L703.7,406.0L702.3,405.5L700.8,405.1L699.4,404.8L698.0,404.6L696.7,404.5L695.5,404.4L694.3,404.4L692.9,404.6L691.5,404.7L690.0,405.0L688.5,405.3L687.0,405.7L685.4,406.2L683.9,406.8L682.5,407.4L681.1,408.0L679.8,408.7L678.6,409.5L677.3,410.3L676.0,411.2L674.7,412.2L673.4,413.2L672.3,414.2L671.2,415.3L670.2,416.4L669.2,417.5L668.4,418.7L667.6,419.9L667.0,421.1L666.4,422.4L665.8,424.0L665.2,425.8L664.7,427.9L664.2,430.1L663.8,432.4L663.5,434.7L663.2,437.2L663.1,439.6L663.0,441.9L663.0,444.2L663.1,446.4L663.3,448.4L663.6,450.5L664.1,452.7L664.6,455.0L665.3,457.3L666.0,459.6L666.9,461.8L667.8,463.9L668.8,466.0L669.8,467.8L670.9,469.5L672.0,471.0L673.1,472.3L674.2,473.5L675.6,474.6L677.0,475.7L678.6,476.7L680.4,477.7L682.3,478.7L684.4,479.7L686.5,480.7L688.8,481.6L691.3,482.5L693.8,483.3L696.3,484.1L698.8,484.8L701.4,485.4L704.3,485.9L707.3,486.3L710.4,486.7L713.7,487.0L717.1,487.2L720.5,487.5L724.0,487.7L727.5,488.0L731.0,488.3L734.5,488.6L737.8,488.9L741.1,489.2L744.5,489.5L747.8,489.9L751.2,490.3L754.6,490.7L758.0,491.0L761.4,491.4L764.7,491.8L768.0,492.2L771.3,492.7L774.5,493.2L777.7,493.7L781.1,494.2L784.5,494.8L787.9,495.5L791.3,496.1L794.5,496.7L797.7,497.4L800.6,498.0L803.3,498.5L805.7,499.1L807.7,499.6L809.4,500.0Z" fill="#b8b460" filter="url(#L2)"/><circle cx="701.0" cy="434.5" r="18" fill="#b8b460" filter="url(#L2)"/><circle cx="758.5" cy="447.4" r="9.8" fill="url(#gg)" filter="url(#L1)"/><circle cx="741.2" cy="442" r="9.8" fill="url(#gg)" filter="url(#L1)"/><circle cx="731.1" cy="456.5" r="9.8" fill="url(#gg)" filter="url(#L1)"/><circle cx="748.5" cy="463" r="9.8" fill="url(#gg)" filter="url(#L1)"/><circle cx="733.0" cy="476.6" r="9.8" fill="url(#gg)" filter="url(#L1)"/><circle cx="750.3" cy="484.8" r="9.8" fill="url(#gg)" filter="url(#L1)"/><path d="M607,298.5 C628,298.5 645,311 645,330 C645,350 630,368 626,388 C624,402 628,410 637,418 L577,418 C586,410 590,402 588,388 C584,368 569,350 569,330 C569,311 586,298.5 607,298.5 Z" fill="#b8b460" filter="url(#L3)"/><path d="M575.4,448.9 C570,468 556,488 544.4,499.3 C546,504 549,507.5 551,507.5 C556,507 560,505 562.3,505.9 C565,510 567,512.4 567.2,512.4 C572,514 578,514 581.9,514 C584,517 586,518.9 586.8,518.9 C592,520.5 598,521.3 607,521.3 C616,521.3 622,520.5 627.2,518.9 C628,518.9 630,517 632.1,514 C636,514 642,514 646.8,512.4 C647,512.4 649,510 651.7,505.9 C654,505 658,507 663,507.5 C665,507.5 668,504 669.6,499.3 C658,488 644,468 638.6,448.9 Z" fill="#b8b460" filter="url(#L3)"/><path d="M577.0,449.0 C573.9,452.8 571.3,462.6 567.0,470.0 C562.7,477.4 557.0,484.6 553.0,490.0 C549.0,495.4 545.2,496.9 544.5,500.0 C543.8,503.1 545.9,506.4 549.0,507.5 C552.1,508.6 557.7,509.5 562.0,506.0 C566.3,502.5 569.4,495.4 573.0,488.0 C576.6,480.6 580.0,472.0 582.0,465.0 C584.0,458.0 584.9,451.9 584.0,449.0 C583.1,446.1 580.1,445.2 577.0,449.0Z" fill="#b8b460" filter="url(#L2)"/><path d="M637.0,449.0 C640.1,452.8 642.7,462.6 647.0,470.0 C651.3,477.4 657.0,484.6 661.0,490.0 C665.0,495.4 668.8,496.9 669.5,500.0 C670.2,503.1 668.1,506.4 665.0,507.5 C661.9,508.6 656.3,509.5 652.0,506.0 C647.7,502.5 644.6,495.4 641.0,488.0 C637.4,480.6 634.0,472.0 632.0,465.0 C630.0,458.0 629.1,451.9 630.0,449.0 C630.9,446.1 633.9,445.2 637.0,449.0Z" fill="#b8b460" filter="url(#L2)"/><path d="M584.0,449.0 C581.1,453.1 580.5,463.7 578.0,472.0 C575.5,480.3 571.8,488.0 570.0,495.0 C568.2,502.0 566.4,507.5 568.0,511.0 C569.6,514.5 575.4,517.4 579.0,514.5 C582.6,511.6 585.7,503.0 588.0,495.0 C590.3,487.0 590.9,478.3 592.0,470.0 C593.1,461.7 595.4,452.8 594.0,449.0 C592.6,445.2 586.9,444.9 584.0,449.0Z" fill="#b8b460" filter="url(#L2)"/><path d="M630.0,449.0 C632.9,453.1 633.5,463.7 636.0,472.0 C638.5,480.3 642.2,488.0 644.0,495.0 C645.8,502.0 647.6,507.5 646.0,511.0 C644.4,514.5 638.6,517.4 635.0,514.5 C631.4,511.6 628.3,503.0 626.0,495.0 C623.7,487.0 623.1,478.3 622.0,470.0 C620.9,461.7 618.6,452.8 620.0,449.0 C621.4,445.2 627.1,444.9 630.0,449.0Z" fill="#b8b460" filter="url(#L2)"/><path d="M594.0,449.0 C588.4,454.6 590.4,469.9 589.0,480.0 C587.6,490.1 586.0,498.2 586.0,505.0 C586.0,511.8 585.2,515.0 589.0,518.0 C592.8,521.0 600.5,521.5 607.0,521.5 C613.5,521.5 621.2,521.0 625.0,518.0 C628.8,515.0 628.0,511.8 628.0,505.0 C628.0,498.2 626.4,490.1 625.0,480.0 C623.6,469.9 625.6,454.6 620.0,449.0 C614.4,443.4 599.6,443.4 594.0,449.0Z" fill="#b8b460" filter="url(#L2)"/><path d="M591,507 C598,512 616,512 623,507" fill="none" stroke="#4a4820" stroke-width="1.2"/><path d="M569.5,328 C569.5,310 586,299 607,299 C628,299 644.5,310 644.5,328 C642,330 638,330 635,326 C630,316 622,316 614,321 C611,323 609,324 607,324 C605,324 603,323 600,321 C592,316 584,316 579,326 C576,330 572,330 569.5,328 Z" fill="#b8b460" filter="url(#L1)"/><path d="M573.7,418 C590,414 624,414 640.3,418 L638,449.5 C620,447 594,447 576,449.5 Z" fill="#b8b460" filter="url(#L1)"/><path d="M574,425 C590,421 624,421 640,425 M575,437 C592,433 622,433 639,437" fill="none" stroke="#4a4820" stroke-width="1.8"/></svg>
<svg class="a" style="left:0px;top:0px;overflow:visible" width="1360" height="768" viewBox="0 0 1360 768"><rect x="96.5" y="617.5" width="48" height="48" fill="none" stroke="#30c030" stroke-width="1.2"/><path d="M96.5,601.5 V617.5" stroke="#30c030" stroke-width="1.2"/><path d="M92.5,598.8 L96.5,604 L100.3,598.8 M96.5,604 V606" fill="none" stroke="#60e060" stroke-width="1"/><path d="M93.5,627.5 L96.5,617.5 L99.5,627.5" fill="none" stroke="#60e060" stroke-width="1"/><path d="M136,665.5 H145" stroke="#e07030" stroke-width="1.5"/><path d="M152.2,658.8 L159.5,671.2 M159.5,658.8 L152.2,671.2" stroke="#f04040" stroke-width="1.3"/></svg>
<svg class="a" style="left:46px;top:106px;" width="1142" height="15" viewBox="0 0 1142 15"><rect x="12" y="10" width="1" height="5" fill="#000"/><rect x="29" y="10" width="1" height="5" fill="#000"/><rect x="46" y="4" width="1" height="10" fill="#000"/><rect x="16.6" y="2" width="26.4" height="13" fill="#f0f0f0"/><text x="41.5" y="14" text-anchor="end" font-family="Liberation Sans" font-weight="bold" font-size="14" stroke="#000" stroke-width="0.35">300</text><rect x="64" y="10" width="1" height="5" fill="#000"/><rect x="81" y="10" width="1" height="5" fill="#000"/><rect x="98" y="10" width="1" height="5" fill="#000"/><rect x="115" y="10" width="1" height="5" fill="#000"/><rect x="133" y="10" width="1" height="5" fill="#000"/><rect x="150" y="10" width="1" height="5" fill="#000"/><rect x="167" y="10" width="1" height="5" fill="#000"/><rect x="184" y="10" width="1" height="5" fill="#000"/><rect x="202" y="10" width="1" height="5" fill="#000"/><rect x="219" y="4" width="1" height="10" fill="#000"/><rect x="189.6" y="2" width="26.4" height="13" fill="#f0f0f0"/><text x="214.5" y="14" text-anchor="end" font-family="Liberation Sans" font-weight="bold" font-size="14" stroke="#000" stroke-width="0.35">200</text><rect x="236" y="10" width="1" height="5" fill="#000"/><rect x="253" y="10" width="1" height="5" fill="#000"/><rect x="270" y="10" width="1" height="5" fill="#000"/><rect x="288" y="10" width="1" height="5" fill="#000"/><rect x="305" y="10" width="1" height="5" fill="#000"/><rect x="322" y="10" width="1" height="5" fill="#000"/><rect x="339" y="10" width="1" height="5" fill="#000"/><rect x="357" y="10" width="1" height="5" fill="#000"/><rect x="374" y="10" width="1" height="5" fill="#000"/><rect x="391" y="4" width="1" height="10" fill="#000"/><rect x="361.6" y="2" width="26.4" height="13" fill="#f0f0f0"/><text x="386.5" y="14" text-anchor="end" font-family="Liberation Sans" font-weight="bold" font-size="14" stroke="#000" stroke-width="0.35">100</text><rect x="408" y="10" width="1" height="5" fill="#000"/><rect x="426" y="10" width="1" height="5" fill="#000"/><rect x="443" y="10" width="1" height="5" fill="#000"/><rect x="460" y="10" width="1" height="5" fill="#000"/><rect x="477" y="10" width="1" height="5" fill="#000"/><rect x="494" y="10" width="1" height="5" fill="#000"/><rect x="512" y="10" width="1" height="5" fill="#000"/><rect x="529" y="10" width="1" height="5" fill="#000"/><rect x="546" y="10" width="1" height="5" fill="#000"/><rect x="563" y="4" width="1" height="10" fill="#000"/><rect x="549.2" y="2" width="10.8" height="13" fill="#f0f0f0"/><text x="558.5" y="14" text-anchor="end" font-family="Liberation Sans" font-weight="bold" font-size="14" stroke="#000" stroke-width="0.35">0</text><rect x="581" y="10" width="1" height="5" fill="#000"/><rect x="598" y="10" width="1" height="5" fill="#000"/><rect x="615" y="10" width="1" height="5" fill="#000"/><rect x="632" y="10" width="1" height="5" fill="#000"/><rect x="650" y="10" width="1" height="5" fill="#000"/><rect x="667" y="10" width="1" height="5" fill="#000"/><rect x="684" y="10" width="1" height="5" fill="#000"/><rect x="701" y="10" width="1" height="5" fill="#000"/><rect x="718" y="10" width="1" height="5" fill="#000"/><rect x="736" y="4" width="1" height="10" fill="#000"/><rect x="706.6" y="2" width="26.4" height="13" fill="#f0f0f0"/><text x="731.5" y="14" text-anchor="end" font-family="Liberation Sans" font-weight="bold" font-size="14" stroke="#000" stroke-width="0.35">100</text><rect x="753" y="10" width="1" height="5" fill="#000"/><rect x="770" y="10" width="1" height="5" fill="#000"/><rect x="787" y="10" width="1" height="5" fill="#000"/><rect x="805" y="10" width="1" height="5" fill="#000"/><rect x="822" y="10" width="1" height="5" fill="#000"/><rect x="839" y="10" width="1" height="5" fill="#000"/><rect x="856" y="10" width="1" height="5" fill="#000"/><rect x="874" y="10" width="1" height="5" fill="#000"/><rect x="891" y="10" width="1" height="5" fill="#000"/><rect x="908" y="4" width="1" height="10" fill="#000"/><rect x="878.6" y="2" width="26.4" height="13" fill="#f0f0f0"/><text x="903.5" y="14" text-anchor="end" font-family="Liberation Sans" font-weight="bold" font-size="14" stroke="#000" stroke-width="0.35">200</text><rect x="925" y="10" width="1" height="5" fill="#000"/><rect x="943" y="10" width="1" height="5" fill="#000"/><rect x="960" y="10" width="1" height="5" fill="#000"/><rect x="977" y="10" width="1" height="5" fill="#000"/><rect x="994" y="10" width="1" height="5" fill="#000"/><rect x="1011" y="10" width="1" height="5" fill="#000"/><rect x="1029" y="10" width="1" height="5" fill="#000"/><rect x="1046" y="10" width="1" height="5" fill="#000"/><rect x="1063" y="10" width="1" height="5" fill="#000"/><rect x="1080" y="4" width="1" height="10" fill="#000"/><rect x="1050.6" y="2" width="26.4" height="13" fill="#f0f0f0"/><text x="1075.5" y="14" text-anchor="end" font-family="Liberation Sans" font-weight="bold" font-size="14" stroke="#000" stroke-width="0.35">300</text><rect x="1098" y="10" width="1" height="5" fill="#000"/><rect x="1115" y="10" width="1" height="5" fill="#000"/><rect x="1113" y="2" width="29" height="13" fill="#f0f0f0"/><text x="1115.6" y="13.6" font-family="Liberation Sans" font-weight="bold" font-size="13.5" stroke="#000" stroke-width="0.3">mm</text></svg>
<div class="a" style="left:1188px;top:106px;width:1px;height:610px;background:#a0a0a0"></div>
<div class="a" style="left:1185px;top:106px;width:1px;height:610px;background:#fff"></div>
<div class="a" style="left:31px;top:114px;width:1px;height:602px;background:#a0a0a0"></div>
<svg class="a" style="left:32px;top:122px;overflow:hidden" width="15" height="594" viewBox="0 0 15 594"><rect x="9" y="593" width="5" height="1" fill="#000"/><rect x="9" y="584" width="5" height="1" fill="#000"/><rect x="9" y="575" width="5" height="1" fill="#000"/><rect x="9" y="567" width="5" height="1" fill="#000"/><rect x="9" y="558" width="5" height="1" fill="#000"/><rect x="3" y="549" width="11" height="1" fill="#000"/><rect x="9" y="540" width="5" height="1" fill="#000"/><rect x="9" y="532" width="5" height="1" fill="#000"/><rect x="9" y="523" width="5" height="1" fill="#000"/><rect x="9" y="514" width="5" height="1" fill="#000"/><rect x="9" y="506" width="5" height="1" fill="#000"/><rect x="9" y="497" width="5" height="1" fill="#000"/><rect x="9" y="488" width="5" height="1" fill="#000"/><rect x="9" y="480" width="5" height="1" fill="#000"/><rect x="9" y="471" width="5" height="1" fill="#000"/><rect x="3" y="462" width="11" height="1" fill="#000"/><rect x="9" y="454" width="5" height="1" fill="#000"/><rect x="9" y="445" width="5" height="1" fill="#000"/><rect x="9" y="436" width="5" height="1" fill="#000"/><rect x="9" y="427" width="5" height="1" fill="#000"/><rect x="9" y="419" width="5" height="1" fill="#000"/><rect x="9" y="410" width="5" height="1" fill="#000"/><rect x="9" y="401" width="5" height="1" fill="#000"/><rect x="9" y="393" width="5" height="1" fill="#000"/><rect x="9" y="384" width="5" height="1" fill="#000"/><rect x="3" y="375" width="11" height="1" fill="#000"/><rect x="9" y="366" width="5" height="1" fill="#000"/><rect x="9" y="358" width="5" height="1" fill="#000"/><rect x="9" y="349" width="5" height="1" fill="#000"/><rect x="9" y="340" width="5" height="1" fill="#000"/><rect x="9" y="332" width="5" height="1" fill="#000"/><rect x="9" y="323" width="5" height="1" fill="#000"/><rect x="9" y="314" width="5" height="1" fill="#000"/><rect x="9" y="306" width="5" height="1" fill="#000"/><rect x="9" y="297" width="5" height="1" fill="#000"/><rect x="3" y="288" width="11" height="1" fill="#000"/><rect x="9" y="280" width="5" height="1" fill="#000"/><rect x="9" y="271" width="5" height="1" fill="#000"/><rect x="9" y="262" width="5" height="1" fill="#000"/><rect x="9" y="253" width="5" height="1" fill="#000"/><rect x="9" y="245" width="5" height="1" fill="#000"/><rect x="9" y="236" width="5" height="1" fill="#000"/><rect x="9" y="227" width="5" height="1" fill="#000"/><rect x="9" y="219" width="5" height="1" fill="#000"/><rect x="9" y="210" width="5" height="1" fill="#000"/><rect x="3" y="201" width="11" height="1" fill="#000"/><rect x="9" y="192" width="5" height="1" fill="#000"/><rect x="9" y="184" width="5" height="1" fill="#000"/><rect x="9" y="175" width="5" height="1" fill="#000"/><rect x="9" y="166" width="5" height="1" fill="#000"/><rect x="9" y="158" width="5" height="1" fill="#000"/><rect x="9" y="149" width="5" height="1" fill="#000"/><rect x="9" y="140" width="5" height="1" fill="#000"/><rect x="9" y="132" width="5" height="1" fill="#000"/><rect x="9" y="123" width="5" height="1" fill="#000"/><rect x="3" y="114" width="11" height="1" fill="#000"/><rect x="9" y="106" width="5" height="1" fill="#000"/><rect x="9" y="97" width="5" height="1" fill="#000"/><rect x="9" y="88" width="5" height="1" fill="#000"/><rect x="9" y="79" width="5" height="1" fill="#000"/><rect x="9" y="71" width="5" height="1" fill="#000"/><rect x="9" y="62" width="5" height="1" fill="#000"/><rect x="9" y="53" width="5" height="1" fill="#000"/><rect x="9" y="45" width="5" height="1" fill="#000"/><rect x="9" y="36" width="5" height="1" fill="#000"/><rect x="3" y="27" width="11" height="1" fill="#000"/><rect x="9" y="18" width="5" height="1" fill="#000"/><rect x="9" y="10" width="5" height="1" fill="#000"/><rect x="9" y="1" width="5" height="1" fill="#000"/><rect x="2" y="584.4" width="13" height="49.6" fill="#f0f0f0"/><text x="10.3" y="595.7" text-anchor="middle" font-family="Liberation Sans" font-weight="bold" font-size="13" stroke="#000" stroke-width="0.35">2</text><text x="10.3" y="612.0" text-anchor="middle" font-family="Liberation Sans" font-weight="bold" font-size="13" stroke="#000" stroke-width="0.35">0</text><text x="10.3" y="628.3" text-anchor="middle" font-family="Liberation Sans" font-weight="bold" font-size="13" stroke="#000" stroke-width="0.35">0</text><rect x="2" y="497.4" width="13" height="49.6" fill="#f0f0f0"/><text x="10.3" y="508.7" text-anchor="middle" font-family="Liberation Sans" font-weight="bold" font-size="13" stroke="#000" stroke-width="0.35">1</text><text x="10.3" y="525.0" text-anchor="middle" font-family="Liberation Sans" font-weight="bold" font-size="13" stroke="#000" stroke-width="0.35">5</text><text x="10.3" y="541.3" text-anchor="middle" font-family="Liberation Sans" font-weight="bold" font-size="13" stroke="#000" stroke-width="0.35">0</text><rect x="2" y="410.4" width="13" height="49.6" fill="#f0f0f0"/><text x="10.3" y="421.7" text-anchor="middle" font-family="Liberation Sans" font-weight="bold" font-size="13" stroke="#000" stroke-width="0.35">1</text><text x="10.3" y="438.0" text-anchor="middle" font-family="Liberation Sans" font-weight="bold" font-size="13" stroke="#000" stroke-width="0.35">0</text><text x="10.3" y="454.3" text-anchor="middle" font-family="Liberation Sans" font-weight="bold" font-size="13" stroke="#000" stroke-width="0.35">0</text><rect x="2" y="339.7" width="13" height="33.3" fill="#f0f0f0"/><text x="10.3" y="351.0" text-anchor="middle" font-family="Liberation Sans" font-weight="bold" font-size="13" stroke="#000" stroke-width="0.35">5</text><text x="10.3" y="367.3" text-anchor="middle" font-family="Liberation Sans" font-weight="bold" font-size="13" stroke="#000" stroke-width="0.35">0</text><rect x="2" y="269.0" width="13" height="17.0" fill="#f0f0f0"/><text x="10.3" y="280.3" text-anchor="middle" font-family="Liberation Sans" font-weight="bold" font-size="13" stroke="#000" stroke-width="0.35">0</text><rect x="2" y="165.7" width="13" height="33.3" fill="#f0f0f0"/><text x="10.3" y="177.0" text-anchor="middle" font-family="Liberation Sans" font-weight="bold" font-size="13" stroke="#000" stroke-width="0.35">5</text><text x="10.3" y="193.3" text-anchor="middle" font-family="Liberation Sans" font-weight="bold" font-size="13" stroke="#000" stroke-width="0.35">0</text><rect x="2" y="62.4" width="13" height="49.6" fill="#f0f0f0"/><text x="10.3" y="73.7" text-anchor="middle" font-family="Liberation Sans" font-weight="bold" font-size="13" stroke="#000" stroke-width="0.35">1</text><text x="10.3" y="90.0" text-anchor="middle" font-family="Liberation Sans" font-weight="bold" font-size="13" stroke="#000" stroke-width="0.35">0</text><text x="10.3" y="106.3" text-anchor="middle" font-family="Liberation Sans" font-weight="bold" font-size="13" stroke="#000" stroke-width="0.35">0</text><rect x="2" y="-24.6" width="13" height="49.6" fill="#f0f0f0"/><text x="10.3" y="-13.3" text-anchor="middle" font-family="Liberation Sans" font-weight="bold" font-size="13" stroke="#000" stroke-width="0.35">1</text><text x="10.3" y="3.0" text-anchor="middle" font-family="Liberation Sans" font-weight="bold" font-size="13" stroke="#000" stroke-width="0.35">5</text><text x="10.3" y="19.3" text-anchor="middle" font-family="Liberation Sans" font-weight="bold" font-size="13" stroke="#000" stroke-width="0.35">0</text></svg>
<div class="a t" style="left:1170.5px;top:129px;"><svg width="8" height="6"><path d="M0.8 5.2L4 1.5L7.2 5.2" fill="none" stroke="#a8a8a8" stroke-width="1.5"/></svg></div>
<div class="a t" style="left:1170.5px;top:687px;"><svg width="8" height="6"><path d="M0.8 0.8L4 4.5L7.2 0.8" fill="none" stroke="#909090" stroke-width="1.6"/></svg></div>
<div class="a t" style="left:53.5px;top:702.5px;"><svg width="6" height="8"><path d="M5.2 0.8L1.5 4L5.2 7.2" fill="none" stroke="#a0a0a0" stroke-width="1.5"/></svg></div>
<div class="a t" style="left:1154.5px;top:702.5px;"><svg width="6" height="8"><path d="M0.8 0.8L4.5 4L0.8 7.2" fill="none" stroke="#909090" stroke-width="1.6"/></svg></div>
<div class="a" style="left:0px;top:110px;width:31px;height:1px;background:#a0a0a0"></div>
<div class="a" style="left:0px;top:113px;width:31px;height:1px;background:#fff"></div>
<div class="a" style="left:30px;top:113px;width:1px;height:243px;background:#a0a0a0"></div>
<div class="a" style="left:0px;top:355px;width:30px;height:1px;background:#a0a0a0"></div>
<div class="a" style="left:0px;top:356px;width:30px;height:1px;background:#fff"></div>
<div class="a" style="left:0px;top:360px;width:29px;height:1px;background:#a0a0a0"></div>
<div class="a" style="left:29px;top:360px;width:1px;height:270px;background:#a0a0a0"></div>
<div class="a" style="left:0px;top:630px;width:30px;height:1px;background:#a0a0a0"></div>
<div class="a" style="left:2px;top:533px;width:25px;height:1px;background:#a0a0a0"></div>
<div class="a" style="left:30px;top:630px;width:1px;height:86px;background:#a0a0a0"></div>
<svg class="a" style="left:1193px;top:115px;" width="111" height="8" viewBox="0 0 111 8"><rect x="0" y="1" width="110" height="1" fill="#a0a0a0"/><rect x="0" y="2" width="110" height="1" fill="#fff"/><rect x="0" y="5" width="110" height="1" fill="#a0a0a0"/><rect x="0" y="6" width="110" height="1" fill="#fff"/></svg>
<svg class="a" style="left:1308px;top:111px;" width="12" height="12" viewBox="0 0 12 12"><rect x="0.5" y="0.5" width="11" height="11" fill="#f0f0f0" stroke="#fff"/><path d="M11.5 0.5V11.5H0.5" fill="none" stroke="#808080"/><rect x="3" y="3" width="6" height="6" fill="none" stroke="#000" stroke-width="1.2"/><rect x="3" y="3" width="6" height="2" fill="#000"/></svg>
<svg class="a" style="left:1321px;top:111px;" width="12" height="12" viewBox="0 0 12 12"><rect x="0.5" y="0.5" width="11" height="11" fill="#f0f0f0" stroke="#fff"/><path d="M11.5 0.5V11.5H0.5" fill="none" stroke="#808080"/><path d="M3 3L9 9M9 3L3 9" stroke="#000" stroke-width="1.6"/></svg>
<div class="a" style="left:1189px;top:125px;width:148px;height:1px;background:#a0a0a0"></div>
<div class="a" style="left:1189px;top:126px;width:148px;height:1px;background:#fff"></div>
<div class="a" style="left:1190px;top:130px;width:32px;height:22px;background:#fff"></div>
<div class="a" style="left:1222px;top:130px;width:1px;height:22px;background:#d8d8d8"></div>
<div class="a" style="left:1190px;top:152px;width:146px;height:1px;background:#d0d0d0"></div>
<div class="a" style="left:1189px;top:288px;width:148px;height:1px;background:#a0a0a0"></div>
<div class="a" style="left:1189px;top:289px;width:148px;height:1px;background:#fff"></div>
<div class="a t" style="left:1196px;top:167px;font-size:12px;transform:scaleX(0.91);transform-origin:0 0">Nudge dist.</div>
<div class="a t" style="left:1196px;top:187px;font-size:12px;transform:scaleX(0.92);transform-origin:0 0">Angle Incr.</div>
<div class="a" style="left:1268px;top:162px;width:42px;height:20px;background:#fff;border:1px solid #7a7a7a;overflow:hidden"></div>
<div class="a t" style="left:1271px;top:166px;font-size:12px;letter-spacing:-0.5px;width:38px;overflow:hidden">200.000</div>
<div class="a" style="left:1268px;top:183px;width:42px;height:20px;background:#fff;border:1px solid #7a7a7a"></div>
<div class="a t" style="left:1271px;top:187px;font-size:12px;letter-spacing:-0.5px">90.000</div>
<div class="a t" style="left:1200px;top:208px;width:63px;height:21px;background:#e1e1e1;border:2px solid #0078d7;font-size:11px;letter-spacing:-0.15px;display:flex;align-items:center;justify-content:center">[Q]Select</div>
<div class="a t" style="left:1267px;top:208px;width:63px;height:21px;background:#e1e1e1;border:1px solid #adadad;font-size:11px;letter-spacing:-0.15px;display:flex;align-items:center;justify-content:center">[R]Lock</div>
<div class="a t" style="left:1200px;top:234px;width:63px;height:21px;background:#e1e1e1;border:1px solid #adadad;font-size:11px;letter-spacing:-0.15px;display:flex;align-items:center;justify-content:center">[W]Display</div>
<div class="a t" style="left:1267px;top:234px;width:63px;height:21px;background:#e1e1e1;border:1px solid #adadad;font-size:11px;letter-spacing:-0.15px;display:flex;align-items:center;justify-content:center">[T]Order</div>
<div class="a t" style="left:1200px;top:260px;width:63px;height:21px;background:#e1e1e1;border:1px solid #adadad;font-size:11px;letter-spacing:-0.15px;display:flex;align-items:center;justify-content:center">[E]Layer</div>
<div class="a t" style="left:1267px;top:260px;width:63px;height:21px;background:#e1e1e1;border:1px solid #adadad;font-size:11px;letter-spacing:-0.15px;display:flex;align-items:center;justify-content:center">[Y]Align</div>
<div class="a" style="left:1342px;top:186px;width:17px;height:18px;background:#ffc0cb;border:1px solid #202020"></div>
<div class="a" style="left:1342px;top:206px;width:17px;height:18px;background:#f0f0f0;border:1px solid #c8c8c8"></div>
<svg class="a" style="left:1346px;top:213px;" width="9" height="5" viewBox="0 0 9 5"><path d="M0 5L4.5 0L9 5Z" fill="#a0a0a0"/></svg>
<div class="a" style="left:1342px;top:226px;width:17px;height:18px;background:#f0f0f0;border:1px solid #c8c8c8"></div>
<svg class="a" style="left:1346px;top:233px;" width="9" height="5" viewBox="0 0 9 5"><path d="M0 0L4.5 5L9 0Z" fill="#000"/></svg>
<div class="a" style="left:1342px;top:246px;width:17px;height:18px;background:#ff0000;border:1px solid #202020"></div>
<div class="a" style="left:1342px;top:266px;width:17px;height:18px;background:#ffff00;border:1px solid #202020"></div>
<div class="a" style="left:1342px;top:286px;width:17px;height:18px;background:#0000ff;border:1px solid #202020"></div>
<div class="a" style="left:1342px;top:306px;width:17px;height:18px;background:#00ff00;border:1px solid #202020"></div>
<div class="a" style="left:1342px;top:326px;width:17px;height:18px;background:#00ffff;border:1px solid #202020"></div>
<div class="a" style="left:1342px;top:346px;width:17px;height:18px;background:#ff00ff;border:1px solid #202020"></div>
<div class="a" style="left:1342px;top:366px;width:17px;height:18px;background:#ffffff;border:1px solid #202020"></div>
<div class="a" style="left:1342px;top:386px;width:17px;height:18px;background:#000000;border:1px solid #202020"></div>
<div class="a" style="left:1342px;top:406px;width:17px;height:18px;background:#c0c0c0;border:1px solid #202020"></div>
<div class="a" style="left:1342px;top:426px;width:17px;height:18px;background:#ff6820;border:1px solid #202020"></div>
<div class="a" style="left:1342px;top:446px;width:17px;height:18px;background:#a52a2a;border:1px solid #202020"></div>
<div class="a" style="left:1342px;top:466px;width:17px;height:18px;background:#ffc0cb;border:1px solid #202020"></div>
<div class="a" style="left:1342px;top:486px;width:17px;height:18px;background:#3cb371;border:1px solid #202020"></div>
<div class="a" style="left:1342px;top:506px;width:17px;height:18px;background:#358aa0;border:1px solid #202020"></div>
<div class="a" style="left:1342px;top:526px;width:17px;height:18px;background:#ffd700;border:1px solid #202020"></div>
<div class="a" style="left:1342px;top:546px;width:17px;height:18px;background:#f4a460;border:1px solid #202020"></div>
<div class="a" style="left:1342px;top:566px;width:17px;height:18px;background:#808000;border:1px solid #202020"></div>
<div class="a" style="left:1342px;top:586px;width:17px;height:18px;background:#800000;border:1px solid #202020"></div>
<div class="a" style="left:1342px;top:606px;width:17px;height:18px;background:#000080;border:1px solid #202020"></div>
<div class="a" style="left:1342px;top:626px;width:17px;height:18px;background:#008000;border:1px solid #202020"></div>
<div class="a" style="left:1342px;top:646px;width:17px;height:18px;background:#008080;border:1px solid #202020"></div>
<div class="a" style="left:1342px;top:666px;width:17px;height:18px;background:#800080;border:1px solid #202020"></div>
<div class="a" style="left:1342px;top:686px;width:17px;height:18px;background:#4b0082;border:1px solid #202020"></div>
<div class="a" style="left:1342px;top:706px;width:17px;height:10px;background:#8fa8cc;border:1px solid #202020"></div>
<div class="a" style="left:0px;top:716px;width:1360px;height:1px;background:#a0a0a0"></div>
<div class="a" style="left:0px;top:717px;width:1360px;height:1px;background:#fff"></div>
<div class="a" style="left:0px;top:746px;width:1360px;height:1px;background:#a0a0a0"></div>
<div class="a" style="left:0px;top:747px;width:1360px;height:1px;background:#fff"></div>
<div class="a" style="left:4px;top:718px;width:1px;height:28px;background:#a0a0a0"></div>
<div class="a" style="left:647px;top:718px;width:1px;height:28px;background:#a0a0a0"></div>
<div class="a" style="left:652px;top:718px;width:1px;height:28px;background:#a0a0a0"></div>
<div class="a" style="left:653px;top:718px;width:1px;height:28px;background:#fff"></div>
<div class="a" style="left:829px;top:718px;width:1px;height:28px;background:#a0a0a0"></div>
<div class="a" style="left:834px;top:718px;width:1px;height:28px;background:#a0a0a0"></div>
<div class="a" style="left:835px;top:718px;width:1px;height:28px;background:#fff"></div>
<svg class="a" style="left:0;top:0" width="1360" height="768" viewBox="0 0 1360 768"><path d="M16.5,51.5 H24 L26.5,54 V63.5 H16.5 Z" fill="#fff" stroke="#000" stroke-width="1.4" stroke-linejoin="miter"/><path d="M23.5,51.5 V54.5 H26.5" fill="none" stroke="#000" stroke-width="1"/><path d="M43.5,63.5 V55 H47 L48,54 H51 V56 H54 V58" fill="#f8f070" stroke="#000" stroke-width="1.2"/><path d="M43.5,63.5 L46.5,57.5 H58 L55,63.5 Z" fill="#a0a030" stroke="#000" stroke-width="1.2"/><path d="M51.5,54 C52.5,51.5 55.5,51.5 57,53.5" fill="none" stroke="#000" stroke-width="1.1"/><path d="M55.5,52.5 L58.2,54.5 L58,51.5 Z" fill="#000"/><rect x="72.5" y="51.5" width="13" height="13" fill="#808020" stroke="#000" stroke-width="1.2"/><rect x="75" y="52" width="8" height="6" fill="#e8e8f8"/><rect x="75" y="60" width="8.5" height="4.5" fill="#000"/><rect x="80.5" y="61" width="2" height="3" fill="#fff"/><rect x="83.5" y="52.5" width="1.2" height="1.2" fill="#fff"/><path d="M105,59.5 H122" stroke="#000080" stroke-width="1" stroke-dasharray="2,1.5"/><path d="M113.5,50.5 V68.5" stroke="#000080" stroke-width="1" stroke-dasharray="2,1.5"/><path d="M111,59.5 H116 M113.5,57 V62" stroke="#000080" stroke-width="1.3"/><rect x="129" y="45" width="29" height="26.5" fill="#c9e0f7"/><rect x="158" y="45" width="15" height="26.5" fill="#cce4f7"/><path d="M157.5,45 V71.5" stroke="#b8d6f2"/><rect x="138.8" y="52.8" width="13.5" height="13.2" fill="none" stroke="#0000c8" stroke-width="1.7"/><path d="M139,53 L152,66 M152,53 L139,66" stroke="#0000c8" stroke-width="0.9"/><path d="M161.8,57 H169.2 L165.5,61 Z" fill="#1a1a1a"/><path d="M188,57.5 C190,55.5 194,55.5 195.5,57.5 C197,59.5 196,62 193.5,63" fill="none" stroke="#a0a0a0" stroke-width="1.6"/><path d="M185,56 L185,61 L190,61 Z" fill="#a0a0a0"/><path d="M225,57.5 C223,55.5 219,55.5 217.5,57.5 C216,59.5 217,62 219.5,63" fill="none" stroke="#a0a0a0" stroke-width="1.6"/><path d="M228,56 L228,61 L223,61 Z" fill="#a0a0a0"/><path d="M251.5,53.5 L263,64.5 M262.5,53.5 L252,64.5" stroke="#8a0000" stroke-width="2.3" stroke-linecap="round"/><rect x="262.8" y="64.8" width="1.2" height="1.2" fill="#000"/><path d="M283.5,52 L289.5,60 M289.5,52 L283.5,60" stroke="#a0a0a0" stroke-width="1.1"/><circle cx="284.3" cy="63" r="2.3" fill="none" stroke="#a0a0a0" stroke-width="1.1"/><circle cx="289" cy="63" r="2.3" fill="none" stroke="#a0a0a0" stroke-width="1.1"/><path d="M307.5,53.5 H313 L315,55.5 V62.5 H307.5 Z" fill="#f0f0f0" stroke="#a0a0a0" stroke-width="1.1"/><path d="M313.5,56.5 H319 L321.5,59 V65.5 H313.5 Z" fill="#f0f0f0" stroke="#a0a0a0" stroke-width="1.1"/><path d="M309,56.5 H312 M309,58.5 H312 M315,60.5 H319 M315,62.5 H319" stroke="#a0a0a0"/><rect x="337.5" y="53.5" width="11" height="12" rx="1.5" fill="#a0a0a0"/><rect x="340" y="52" width="6" height="2.5" fill="#a0a0a0"/><rect x="341" y="53.5" width="4" height="1" fill="#fff"/><path d="M343.5,58.5 H349 L351.5,61 V65.5 H343.5 Z" fill="#f4f4f4" stroke="#a0a0a0" stroke-width="1.1"/><path d="M345,61.5 H349 M345,63.5 H349" stroke="#a0a0a0"/><path d="M372.7,56 L377,52.2 H387.2 L382.2,56 Z" fill="#e8f0f0"/><rect x="372.7" y="56" width="9.5" height="10.4" fill="#00e8f8"/><path d="M382.2,56 L387.2,52.2 V62.5 L382.2,66.4 Z" fill="#0010e0"/><path d="M398,57 H405 L401.5,61 Z" fill="#1a1a1a"/><path d="M416.5,56.5 L420.5,52.8 H431 L427,56.5 Z" fill="#800080" stroke="#000" stroke-width="1.4"/><path d="M416.5,56.5 H427 V66.3 H416.5 Z M427,66.3 L431,62.5 V52.8" fill="none" stroke="#000" stroke-width="1.4"/><path d="M420.5,52.8 V62.5 H431 M416.5,66.3 L420.5,62.5" fill="none" stroke="#000" stroke-width="0.9"/><path d="M442.2,57 H449 L445.6,61 Z" fill="#1a1a1a"/><path d="M463.7,49.3 H481.9 V59.8 H463.7 Z" fill="#a0a0a0"/><path d="M465.5,59.8 A7.3,7.3 0 0 1 480.1,59.8 Z" fill="#f0f0f0"/><path d="M465.5,59.8 A7.3,8.6 0 0 0 480.1,59.8 Z" fill="#a0a0a0"/><path d="M492.9,49.3 H511.1 V59 C511.1,64.5 507,68.6 502,68.6 C497,68.6 492.9,64.5 492.9,59 Z" fill="#a0a0a0"/><path d="M532,53.5 H547" stroke="#000" stroke-width="1.2"/><path d="M536.5,53 L542,59.5 M541.5,53 L537.5,59.5" stroke="#000" stroke-width="1.3"/><circle cx="537.3" cy="62.6" r="2.2" fill="none" stroke="#00008a" stroke-width="1.2"/><circle cx="542.3" cy="62.6" r="2.2" fill="none" stroke="#00008a" stroke-width="1.2"/><path d="M567,49.3 L578.5,60.8" stroke="#000" stroke-width="1.1"/><path d="M561.8,65.3 L570.5,56.5" stroke="#c00000" stroke-width="1.2"/><path d="M572,55 L567.5,56.5 L570.5,59.5 Z" fill="#c00000"/><path d="M590.8,67.2 V51.3 H606.7" fill="none" stroke="#000" stroke-width="1.3"/><path d="M590.8,61.5 C592,56 596,52.5 601,51.8" fill="none" stroke="#d00020" stroke-width="1.2"/><path d="M619.8,67.2 V51.3 H635.7" fill="none" stroke="#000" stroke-width="1.3"/><path d="M619.8,62.5 L630,51.8" stroke="#d00020" stroke-width="1.2"/><path d="M648.5,67 V52.6 H661.4 M663.3,54.4 V65.3 H657.6" fill="none" stroke="#a0a0a0" stroke-width="1.2"/><rect x="661.4" y="50.5" width="3.9" height="3.9" fill="none" stroke="#a0a0a0" stroke-width="1"/><path d="M675.8,67.2 V56.3 L682,50.6 H695" fill="none" stroke="#0000a0" stroke-width="1.4"/><path d="M682.6,67.2 V63.4 L689.2,56.4 H695" fill="none" stroke="#0000a0" stroke-width="1.4"/><path d="M679,56 L684,51.5 M684,61 L679,56" stroke="#d00020" stroke-width="1"/><path d="M678,53.5 L681,51 L682,55 Z" fill="#d00020"/><rect x="703.5" y="55.5" width="21" height="5.6" rx="2.8" fill="none" stroke="#a0a0a0" stroke-width="1.1"/><path d="M706.5,58.3 H721.5" stroke="#a0a0a0" stroke-width="1"/><rect x="733.6" y="49.8" width="20" height="18.4" fill="none" stroke="#a0a0a0" stroke-width="1.1"/><rect x="736.5" y="52.5" width="14" height="13" fill="none" stroke="#a0a0a0" stroke-width="1"/><rect x="738.8" y="54.8" width="9.5" height="8.5" fill="none" stroke="#a0a0a0" stroke-width="1"/><rect x="741.6" y="57.2" width="4" height="3.6" fill="none" stroke="#a0a0a0" stroke-width="1"/><rect x="762.0" y="49.8" width="6.5" height="6" fill="none" stroke="#a0a0a0" stroke-width="1.1"/><rect x="765.5" y="52.8" width="6.5" height="6" fill="none" stroke="#a0a0a0" stroke-width="1.1"/><path d="M774.0,53 H777.0 V56" fill="none" stroke="#a0a0a0" stroke-width="1.1"/><path d="M775.0,56 H779.0 L777.0,58.5 Z" fill="#a0a0a0"/><path d="M772.7,59.7 H777.5 V63.3 H780.6 V68.2 H775.7 V64.5 H772.7 Z" fill="none" stroke="#a0a0a0" stroke-width="1.1"/><rect x="791.3" y="49.8" width="6.5" height="6" fill="none" stroke="#a0a0a0" stroke-width="1.1"/><rect x="794.8" y="52.8" width="6.5" height="6" fill="none" stroke="#a0a0a0" stroke-width="1.1"/><path d="M803.3,53 H806.3 V56" fill="none" stroke="#a0a0a0" stroke-width="1.1"/><path d="M804.3,56 H808.3 L806.3,58.5 Z" fill="#a0a0a0"/><path d="M801.5,59.7 H808 V63.3 H805 V65.8 H801.5 Z" fill="none" stroke="#a0a0a0" stroke-width="1.1"/><rect x="820.3" y="49.8" width="6.5" height="6" fill="none" stroke="#a0a0a0" stroke-width="1.1"/><rect x="823.8" y="52.8" width="6.5" height="6" fill="none" stroke="#a0a0a0" stroke-width="1.1"/><path d="M832.3,53 H835.3 V56" fill="none" stroke="#a0a0a0" stroke-width="1.1"/><path d="M833.3,56 H837.3 L835.3,58.5 Z" fill="#a0a0a0"/><rect x="833.2" y="62.8" width="3.4" height="2.8" fill="none" stroke="#a0a0a0" stroke-width="1.1"/><path d="M866.2,56.3 L870.8,60.7 M870.8,56.3 L866.2,60.7" stroke="#e00030" stroke-width="1"/><path d="M890.3,52.4 L902.7,64.7" stroke="#000" stroke-width="1.1"/><path d="M917.3,60.9 C918.5,55 922,52.2 926.5,52.2 C931,52.2 934.5,55 936,60.9" fill="none" stroke="#000" stroke-width="1.1"/><path d="M916,59.5 L918.5,62 M918.5,59.5 L916,62 M934.7,59.5 L937.2,62 M937.2,59.5 L934.7,62 M924.3,50.9 L926.5,53.1 M926.5,50.9 L924.3,53.1 M926.5,50.9 L928.7,53.1 M928.7,50.9 L926.5,53.1" stroke="#e00030" stroke-width="0.9"/><path d="M924.2,60.3 H929.2 M926.7,57.8 V62.8" stroke="#000" stroke-width="1.3"/><path d="M948.3,64.3 C949,60 951,55.5 952.6,56 C954,56.5 953.5,61 955,60.5 C957,60 957.5,55 959.8,53.2" fill="none" stroke="#000" stroke-width="1.1"/><path d="M977.4,52.6 H984 L991.7,59.2 L980.1,65.3 V58.1" fill="none" stroke="#000" stroke-width="1.2"/><circle cx="1012.9" cy="59.5" r="7.5" fill="none" stroke="#000" stroke-width="1.1"/><path d="M1011.3,57.9 L1014.5,61.1 M1014.5,57.9 L1011.3,61.1" stroke="#e00030" stroke-width="0.9"/><ellipse cx="1041.9" cy="59.5" rx="9.6" ry="4" fill="none" stroke="#000" stroke-width="1.1"/><rect x="1062.3" y="53.5" width="17.2" height="10.6" fill="none" stroke="#000" stroke-width="1.2"/><path d="M1060.8,52 L1063.8,55 M1063.8,52 L1060.8,55 M1078.2,62.8 L1081.2,65.8 M1081.2,62.8 L1078.2,65.8" stroke="#e00030" stroke-width="0.9"/><path d="M1099.6,50.0 L1102.1,55.9 L1108.5,56.5 L1103.7,60.7 L1105.1,67.0 L1099.6,63.7 L1094.1,67.0 L1095.5,60.7 L1090.7,56.5 L1097.1,55.9 Z" fill="none" stroke="#000" stroke-width="1.1"/><path d="M1137.7,62.6 L1132.6,67.7 L1125.4,67.7 L1120.3,62.6 L1120.3,55.4 L1125.4,50.3 L1132.6,50.3 L1137.7,55.4 Z" fill="none" stroke="#000" stroke-width="1.2"/><circle cx="20.5" cy="88" r="5.2" fill="#008a10" stroke="#000" stroke-width="1.2"/><rect x="18.2" y="93" width="4.6" height="4.6" fill="#fff" stroke="#000" stroke-width="1"/><path d="M18.2,95.3 H22.8" stroke="#000" stroke-width="1"/><circle cx="49.4" cy="88" r="5.2" fill="#ffff10" stroke="#000" stroke-width="1.2"/><rect x="47.1" y="93" width="4.6" height="4.6" fill="#fff" stroke="#000" stroke-width="1"/><path d="M47.1,95.3 H51.699999999999996" stroke="#000" stroke-width="1"/><path d="M72.3,87 L72.3,96 L74.5,94 L76.3,97.5 L77.5,96.8 L75.8,93.5 L78.5,93.2 Z" fill="#a0a0a0"/><circle cx="82.7" cy="86.6" r="4.3" fill="#f0f0f0" stroke="#a0a0a0" stroke-width="1.2"/><circle cx="82.7" cy="86.6" r="2" fill="#a0a0a0"/><rect x="80.7" y="91" width="4" height="4.5" fill="none" stroke="#a0a0a0" stroke-width="1"/><circle cx="104.2" cy="86.5" r="3.4" fill="#a0a0b0" stroke="#000" stroke-width="1"/><circle cx="111.6" cy="94.3" r="3.4" fill="#ffff20" stroke="#000" stroke-width="1"/><path d="M110.8,83.5 H113.4 V87 H115 L112.1,90 L109.2,87 H110.8 Z" fill="#000"/><path d="M102.6,97.8 H105.2 V94.3 H106.8 L103.9,91.2 L101,94.3 H102.6 Z" fill="#000"/><path d="M130.5,90.5 L136.5,84.5 V87.5 H141 V93.5 H136.5 V96.5 Z" fill="#a0a0a0"/><path d="M131.5,90.5 L136,86 V88.5 H138 L134,90.5 Z" fill="#fff"/><path d="M172,90.5 L166,84.5 V87.5 H161.2 V93.5 H166 V96.5 Z" fill="#a0a0a0"/><path d="M171,90.5 L166.5,86 V88.5 H164 L168,90.5 Z" fill="#fff"/><path d="M194.5,84.5 L198,81.8 V95.5 L194.5,98 Z M198,84.5 L201.5,81.8 V95.5 L198,98 M201.5,84.5 L205,81.8 V95.5 L201.5,98 Z M201.5,84.5 L207.5,84.5 V97 L201.5,99.5" fill="none" stroke="#000080" stroke-width="1.1"/><rect x="221" y="83" width="17" height="2" fill="#400040"/><path d="M221,88.5 H238" stroke="#200020" stroke-width="2" stroke-dasharray="3.5,2"/><path d="M221,92.8 H238" stroke="#200020" stroke-width="2" stroke-dasharray="4,1.5,1.5,1.5"/><path d="M221,96.5 H238" stroke="#200020" stroke-width="2" stroke-dasharray="1.6,2"/><path d="M221,85.5 H238 M221,90.5 H238 M221,94.8 H238" stroke="#a040a0" stroke-width="0.6" opacity="0.6"/><path d="M251.5,87.5 H266 L261.5,93 V97 H256 V93 Z" fill="none" stroke="#a0a0a0" stroke-width="1.3"/><path d="M253,88 H264.5 L261,92 H256 Z" fill="#d8d8d8"/><path d="M255,83 L257,86.5 M259,82 V86.5 M263,83 L261,86.5" stroke="#a0a0a0" stroke-width="1"/><rect x="0" y="114" width="30" height="28.5" fill="#c2ddf4" stroke="#a8cdee" stroke-width="1"/><rect x="8" y="121.5" width="16.5" height="15.5" fill="none" stroke="#0000c0" stroke-width="2.2"/><rect x="6.2" y="119.7" width="3.6" height="3.6" fill="#fff" stroke="#000060" stroke-width="1"/><rect x="22.7" y="119.7" width="3.6" height="3.6" fill="#fff" stroke="#000060" stroke-width="1"/><rect x="6.2" y="135.2" width="3.6" height="3.6" fill="#fff" stroke="#000060" stroke-width="1"/><rect x="22.7" y="135.2" width="3.6" height="3.6" fill="#fff" stroke="#000060" stroke-width="1"/><circle cx="16.2" cy="121.5" r="1.9" fill="#e03030" stroke="#c02020" stroke-width="0.9"/><circle cx="8" cy="129.2" r="1.9" fill="#e03030" stroke="#c02020" stroke-width="0.9"/><circle cx="24.5" cy="129.2" r="1.9" fill="#e03030" stroke="#c02020" stroke-width="0.9"/><circle cx="16.2" cy="137" r="1.9" fill="#e03030" stroke="#c02020" stroke-width="0.9"/><rect x="14.5" y="127.5" width="3.4" height="3.4" fill="#20d020"/><path d="M13.5,153 L23.4,148.1 M9,156 L4.3,168.5" stroke="#0000e0" stroke-width="1.8"/><path d="M15.2,158 L19.3,168 M15.2,158 L25,163.5 L19.5,162.3 Z" fill="none" stroke="#000080" stroke-width="1.3"/><path d="M17,160 L25.2,163.8 L19.8,164.5 Z" fill="#0000c0"/><rect x="8.2" y="151" width="5.3" height="5.3" fill="#e02020" stroke="#a00000" stroke-width="0.8"/><rect x="9.8" y="152.6" width="2" height="2" fill="#ffc0c0"/><text x="4.2" y="196" font-family="Liberation Serif" font-weight="bold" font-size="14" fill="#107010" stroke="#107010" stroke-width="0.7" textLength="22.5" lengthAdjust="spacingAndGlyphs">abc</text><rect x="5.3" y="195.8" width="20" height="2.8" rx="1.4" fill="#0000a0"/><rect x="7" y="196.6" width="12" height="1" fill="#8080ff"/><path d="M24.8,223.2 L19.2,228.8 L11.3,228.8 L5.7,223.2 L5.7,215.4 L11.3,209.8 L19.2,209.8 L24.8,215.4 Z" fill="#fff" stroke="#e00000" stroke-width="1.9"/><rect x="11.2" y="214.6" width="8.2" height="9.4" fill="#f0f0ff" stroke="#0000a0" stroke-width="1.9"/><path d="M2.9,237.5 L11.7,248.5 L2.9,261 Z" fill="#20d8f0"/><path d="M4.1,248.7 L14.1,239.3 L24,249.2 L25.2,253.3 L21.7,259.2 L14.1,259.2 Z" fill="#fff" stroke="#000040" stroke-width="1.3"/><path d="M4.8,248.7 L9.5,244.3 L17,254 L14,258.6 Z" fill="#f8f020"/><path d="M3,277 H14 L9,282.5 H23 L20,287.3 H6 Z" fill="#e8a020" stroke="#b05010" stroke-width="0.9"/><path d="M3,282 H9 L6,287 Z" fill="#f0c040"/><path d="M9.5,284.5 L20,272 L24.6,270.3 L24,275.5 L13,286 Z" fill="#6080e0" stroke="#2030a0" stroke-width="0.9"/><path d="M11,284 L18,276" stroke="#e8f0ff" stroke-width="1.3"/><path d="M11.6,304 V309 L6.8,312.4 L15.1,316.6 L22.9,312.4 L18.7,309 V304 Z" fill="#10d010" stroke="#006000" stroke-width="0.8"/><ellipse cx="15.1" cy="303.8" rx="3.6" ry="1.8" fill="#f0e030" stroke="#806000" stroke-width="0.6"/><rect x="11.2" y="329.3" width="5.8" height="20.6" fill="#fff" stroke="#000" stroke-width="1.1"/><path d="M11.5,338 L16.7,334 M11.5,343 L16.7,339 M11.5,348 L16.7,344" stroke="#404040" stroke-width="1.3"/><text x="4.6" y="347" font-family="Liberation Sans" font-weight="bold" font-size="5.5" fill="#d02030">N</text><text x="19.2" y="347" font-family="Liberation Sans" font-weight="bold" font-size="5.5" fill="#d02030">C</text><rect x="6.5" y="369.5" width="7" height="7.5" fill="#fff" stroke="#000" stroke-width="1.1"/><circle cx="15.1" cy="376.6" r="4.3" fill="#40e0f0" stroke="#000060" stroke-width="1.2"/><path d="M13.3,375 L14.8,376.5" stroke="#000" stroke-width="1.5"/><path d="M18,379.5 L21.5,383.5" stroke="#c01090" stroke-width="2.2"/><circle cx="12.8" cy="403.2" r="4.6" fill="#40e0f0" stroke="#000060" stroke-width="1.2"/><path d="M16,406.5 L19.5,410.5" stroke="#c01090" stroke-width="2.2"/><path d="M17,399 H22" stroke="#000" stroke-width="1.2"/><circle cx="12.8" cy="431.3" r="4.6" fill="#40e0f0" stroke="#000060" stroke-width="1.2"/><path d="M16,434.6 L19.5,438.6" stroke="#c01090" stroke-width="2.2"/><path d="M17.2,427.6 H22.3 M19.8,425 V430.2" stroke="#000" stroke-width="1.2"/><path d="M7.5,455.5 H13.5 L7.5,462 H13" fill="none" stroke="#a0a0a0" stroke-width="1.1"/><path d="M12,458 H21 L10,468.5 H21" fill="none" stroke="#a0a0a0" stroke-width="1.2"/><path d="M17,455 L19.5,457.5 L17,460 M9,463 L7,467.5 L11,467" fill="none" stroke="#a0a0a0" stroke-width="1"/><ellipse cx="13.5" cy="493.8" rx="6.5" ry="1.8" fill="#a8a8b8"/><path d="M5.9,489 C9,484 18,483.5 22.3,490 C18,494.5 9,494.5 5.9,489 Z" fill="#000080"/><circle cx="14.1" cy="489" r="2.6" fill="#20d8e0"/><path d="M7,484.5 L6,482.5 M10,483 L9.5,481 M13,482.5 V480.5 M16,482.5 L16.5,480.5 M19,483.5 L20,481.5" stroke="#000080" stroke-width="1.1"/><path d="M7.5,489 L10.5,487.5" stroke="#fff" stroke-width="0.8"/><path d="M9.5,512 A6,6 0 0 0 8,519" fill="none" stroke="#000060" stroke-width="1.2" stroke-dasharray="1.5,1.5"/><circle cx="16.4" cy="515.3" r="4.7" fill="#40e0f0" stroke="#000060" stroke-width="1.2"/><path d="M16.4,513 V516.5" stroke="#000" stroke-width="1.3"/><path d="M19.5,519 L22.5,522.5" stroke="#c01090" stroke-width="2"/><path d="M9.4,521 L12.9,520 L11.5,523.5 Z" fill="#d000d0"/><path d="M13.7,544 V559 M6.4,551.4 H21.1" stroke="#000" stroke-width="1.3"/><path d="M13.7,543.5 L11,547 H16.4 Z M13.7,559.3 L11,555.8 H16.4 Z M6.1,551.4 L9.6,548.7 V554.1 Z M21.4,551.4 L17.9,548.7 V554.1 Z" fill="#000"/><circle cx="13.1" cy="577.6" r="5.3" fill="#f8f8f8" stroke="#000" stroke-width="1.3"/><path d="M13.1,575 V580.2" stroke="#000" stroke-width="1"/><path d="M13.1,574.3 L11.5,576.3 H14.7 Z M13.1,580.9 L11.5,578.9 H14.7 Z" fill="#000"/><path d="M17.2,581.5 L22,586.3" stroke="#0080d0" stroke-width="2.4"/><path d="M19.8,603.5 A6.5,6.5 0 0 0 7.2,605.8 M7.6,611.3 A6.5,6.5 0 0 0 20.2,609" fill="none" stroke="#000" stroke-width="1.3"/><path d="M21.3,600.5 L21.3,606 L16.5,605 Z M6.1,614.3 L6.1,608.8 L10.9,609.8 Z" fill="#000"/><rect x="7.2" y="717.5" width="28.7" height="26.3" fill="#c8e0f6" stroke="#b0d0ee" stroke-width="1"/><rect x="65" y="717.5" width="27.799999999999997" height="26.3" fill="#c8e0f6" stroke="#b0d0ee" stroke-width="1"/><rect x="93.3" y="717.5" width="28.200000000000003" height="26.3" fill="#c8e0f6" stroke="#b0d0ee" stroke-width="1"/><rect x="122.6" y="717.5" width="28.700000000000017" height="26.3" fill="#c8e0f6" stroke="#b0d0ee" stroke-width="1"/><rect x="151.8" y="717.5" width="29.099999999999994" height="26.3" fill="#c8e0f6" stroke="#b0d0ee" stroke-width="1"/><rect x="245.3" y="717.5" width="28.80000000000001" height="26.3" fill="#c8e0f6" stroke="#b0d0ee" stroke-width="1"/><rect x="274.7" y="717.5" width="28.30000000000001" height="26.3" fill="#c8e0f6" stroke="#b0d0ee" stroke-width="1"/><path d="M16.8,734.9 L25,727.1" stroke="#000" stroke-width="1.1"/><circle cx="15.6" cy="736.1" r="1.8" fill="#fff" stroke="#000" stroke-width="1"/><circle cx="26.2" cy="725.9" r="1.8" fill="#fff" stroke="#000" stroke-width="1"/><path d="M42.1,725.8 H46 L51.5,727.3 M54,729.2 V737.6" fill="none" stroke="#000" stroke-width="1.1"/><rect x="51" y="726.7" width="2.6" height="2.6" fill="#40c080" stroke="#000" stroke-width="0.8"/><path d="M43,736.7 L48.8,730.9 M58.8,721.3 L54.6,725.5" stroke="#0000e0" stroke-width="1.1"/><path d="M49.6,730 L45.6,731 L48.6,734 Z M53.8,726.3 L57.8,725.3 L54.8,722.3 Z" fill="#0000e0"/><path d="M72,725.3 H76 L81.5,727 M84.4,729.5 V737.6" fill="none" stroke="#000" stroke-width="1.1"/><rect x="80.9" y="726.5" width="2.8" height="2.8" fill="#f8d020" stroke="#000" stroke-width="0.8"/><path d="M102.1,737.6 L115.8,724.4 M102.1,727 L116.6,735.4" stroke="#000" stroke-width="1.1"/><rect x="107.7" y="729.6" width="2.9" height="2.9" fill="#60a0a0" stroke="#000" stroke-width="0.9"/><path d="M132.4,724.4 H135.5 C140,724.4 144.3,727.5 144.3,732 V736.7" fill="none" stroke="#000" stroke-width="1.1"/><path d="M132.8,734.3 V725 M134.5,736.1 H144" stroke="#606060" stroke-width="0.8" stroke-dasharray="1,1"/><circle cx="132.8" cy="736.1" r="1.5" fill="#fff" stroke="#000" stroke-width="0.9"/><path d="M166.3,724.4 L172.5,730.1 L166.3,736.5 L160.2,730.1 Z" fill="none" stroke="#000" stroke-width="1"/><circle cx="166.3" cy="724.4" r="1.6" fill="#e08020" stroke="#603000" stroke-width="0.9"/><circle cx="172.5" cy="730.1" r="1.6" fill="#e08020" stroke="#603000" stroke-width="0.9"/><circle cx="166.3" cy="736.5" r="1.6" fill="#e08020" stroke="#603000" stroke-width="0.9"/><circle cx="160.2" cy="730.1" r="1.6" fill="#e08020" stroke="#603000" stroke-width="0.9"/><path d="M193.3,722.2 V735 M186.2,735 H203.8" stroke="#000" stroke-width="1.1"/><path d="M194.5,730.5 H198 V734" fill="none" stroke="#60a060" stroke-width="0.7" stroke-dasharray="1,1"/><circle cx="193.3" cy="735" r="1.6" fill="#20d0c0" stroke="#006060" stroke-width="0.8"/><path d="M217.1,722.2 L232.5,736.7" stroke="#000" stroke-width="1.1"/><path d="M214.4,729.2 C217,727 221,727 224,729 C227,731 228,735 225.5,739.4" fill="none" stroke="#000" stroke-width="1.1"/><circle cx="224.1" cy="728.8" r="1.8" fill="#b02070" stroke="#600030" stroke-width="0.8"/><rect x="241.4" y="720" width="1" height="22" fill="#a0a0a0"/><rect x="305.3" y="720" width="1" height="22" fill="#a0a0a0"/><rect x="398.2" y="720" width="1" height="22" fill="#a0a0a0"/><rect x="462.6" y="720" width="1" height="22" fill="#a0a0a0"/><rect x="526.7" y="720" width="1" height="22" fill="#a0a0a0"/><rect x="254.7" y="727.2" width="8.2" height="7.6" rx="1.6" fill="#000060"/><circle cx="256.9" cy="729.3" r="1.1" fill="#fff"/><circle cx="260.7" cy="729.3" r="1.1" fill="#fff"/><circle cx="256.9" cy="732.8" r="1.1" fill="#fff"/><circle cx="260.7" cy="732.8" r="1.1" fill="#fff"/><path d="M288.2,723 V731.3 L281.8,737.2 M288.2,731.3 L294.1,737.2" fill="none" stroke="#000" stroke-width="1.1"/><circle cx="288.2" cy="731.3" r="1.6" fill="#fff" stroke="#d00020" stroke-width="1"/><text x="290.5" y="726.5" font-family="Liberation Sans" font-weight="bold" font-size="5" fill="#000">z</text><text x="278.5" y="737" font-family="Liberation Sans" font-weight="bold" font-size="5" fill="#000">y</text><text x="295" y="737" font-family="Liberation Sans" font-weight="bold" font-size="5" fill="#000">x</text><path d="M312.4,731.3 L322.4,740.7 L332.9,731.3 L322.4,721.9 C318,722 313,726 312.4,731.3 Z" fill="none" stroke="#000" stroke-width="1.1"/><path d="M317.4,726.3 L327.4,736 M317.4,736 L327.9,726.6" stroke="#000" stroke-width="0.9"/><circle cx="320" cy="727.8" r="2" fill="#d01060" stroke="#800030" stroke-width="0.9"/><path d="M341.7,731.3 L351.7,740.7 L362.2,731.3 L351.7,721.9 C347.3,722 342.3,726 341.7,731.3 Z" fill="none" stroke="#000" stroke-width="1.1"/><path d="M346.7,726.3 L356.7,736 M346.7,736 L357.2,726.6" stroke="#000" stroke-width="0.9"/><circle cx="354.7" cy="724.8" r="2" fill="#d01060" stroke="#800030" stroke-width="0.9"/><path d="M370.7,731.3 L380.7,740.7 L391.2,731.3 L380.7,721.9 C376.3,722 371.3,726 370.7,731.3 Z" fill="none" stroke="#000" stroke-width="1.1"/><path d="M375.7,726.3 L385.7,736 M375.7,736 L386.2,726.6" stroke="#000" stroke-width="0.9"/><circle cx="380.6" cy="730.7" r="2" fill="#d01060" stroke="#800030" stroke-width="0.9"/><path d="M412.4,722.2 V729.9 H421" fill="none" stroke="#000" stroke-width="1.1"/><path d="M407.2,736.6 H419 L421.5,734.3 M408.5,734.4 H420 L422,732.2 M410,732.3 H421.5" fill="none" stroke="#000" stroke-width="1"/><rect x="421" y="729" width="2.6" height="2.6" fill="#fff" stroke="#c00000" stroke-width="0.9"/><path d="M441.6,722.2 V729.9 H450" fill="none" stroke="#000" stroke-width="1.1"/><path d="M436.4,736.6 H448 L450.5,734.3 M437.7,734.4 H449 L451,732.2 M439.2,732.3 H450.5" fill="none" stroke="#000" stroke-width="1"/><circle cx="446.4" cy="729.9" r="1.8" fill="#d01060" stroke="#800030" stroke-width="0.9"/><path d="M452.6,723.2 L449,726.8" stroke="#0000e0" stroke-width="1.1"/><path d="M448.2,727.6 L448.8,724 L451.8,727 Z" fill="#0000e0"/><path d="M471.7,726 L471.7,736.2 L474.0,733.8 L475.7,737.6 L477.2,736.9 L475.5,733.2 L478.7,733 Z" fill="#000"/><path d="M500.9,726 L500.9,736.2 L503.2,733.8 L504.9,737.6 L506.4,736.9 L504.7,733.2 L507.9,733 Z" fill="#000"/><path d="M478.5,722.5 L488,731.5 M488,722.5 L478.5,731.5" stroke="#000080" stroke-width="0.8"/><circle cx="483.2" cy="727" r="1.9" fill="#f8e020" stroke="#806000" stroke-width="0.9"/><path d="M509.2,724.6 L514.4,729.8 M514.4,724.6 L509.2,729.8" stroke="#e00020" stroke-width="2"/><path d="M533.3,734.5 L540.4,728.8 L552.3,733.2 L546.1,739.4 Z" fill="none" stroke="#000" stroke-width="1.1"/><path d="M544.3,724.5 V733" stroke="#000" stroke-width="1"/><circle cx="544.3" cy="723.5" r="1.5" fill="#fff" stroke="#c00000" stroke-width="0.9"/><circle cx="543.9" cy="734.5" r="2" fill="#d01090" stroke="#800050" stroke-width="0.9"/><path d="M549.2,722.5 V727.5" stroke="#0000e0" stroke-width="1.1"/><path d="M547.3,726.3 H551.1 L549.2,729 Z" fill="#0000e0"/><path d="M567.5,735 L575,727.5 M576.5,726.5 L581,722.2 M563.3,731.9 L566,729 M568,727 L571,724" stroke="#000" stroke-width="1"/><circle cx="575.7" cy="727.5" r="1.6" fill="#fff" stroke="#c00000" stroke-width="0.9"/><circle cx="566.8" cy="735.9" r="2" fill="#d01090" stroke="#800050" stroke-width="0.9"/><path d="M571.2,723.5 L567,727.7" stroke="#0000e0" stroke-width="1.2"/><path d="M566,728.7 L566.6,724.8 L569.9,728.1 Z" fill="#0000e0"/><rect x="599.5" y="723.1" width="10.1" height="14.5" fill="#fff" stroke="#808080" stroke-width="1"/><path d="M602,727.5 H608 M602,730 H608 M602,732.5 H608 M602,735 H608" stroke="#000" stroke-width="1.1"/><path d="M592.5,723.5 L601,732 M601,723.5 L592.5,732" stroke="#000040" stroke-width="0.8"/><circle cx="596.8" cy="727.9" r="1.9" fill="#f8e020" stroke="#806000" stroke-width="0.9"/><path d="M624.5,725.5 L635.8,736.5 M635.8,725.5 L624.5,736.5" stroke="#900000" stroke-width="4.2" stroke-linecap="round"/><path d="M624.5,725.5 L635.8,736.5 M635.8,725.5 L624.5,736.5" stroke="#e80000" stroke-width="3" stroke-linecap="round"/><path d="M663.2,730.6 H673.8 M668.5,725.3 V735.9" stroke="#000" stroke-width="1.4"/><circle cx="668.5" cy="730.6" r="1.4" fill="#000"/><path d="M691,726.6 V734.5 M704.3,726.6 V734.5 M691.5,730.6 H703.8" stroke="#000" stroke-width="1.2"/><path d="M691.5,730.6 L694.5,728.6 V732.6 Z M703.8,730.6 L700.8,728.6 V732.6 Z" fill="#000"/><path d="M721.5,728.5 H732.5 V738 M721.5,725.3 V731.5 M729,738.5 H736" fill="none" stroke="#000" stroke-width="1.2"/><path d="M723,727 L725.5,725.5 V728.5 Z M734.2,737 L735.8,734.5 H732.6 Z" fill="#000"/><path d="M723,726.8 L726,729.5 M734,735.5 V730" stroke="#000" stroke-width="0.9"/><rect x="746.8" y="728.8" width="12.8" height="9.5" fill="none" stroke="#000" stroke-width="1.3"/><path d="M746.8,722.5 V726.5 M759.6,722.5 V726.5 M747.5,724.5 H759 M762.5,728.8 H766 M762.5,738.3 H766 M764.3,729.3 V737.8" stroke="#000" stroke-width="1.1"/><path d="M777,723.3 V739.6 H793.6" fill="none" stroke="#000" stroke-width="1.2"/><path d="M778.5,728.5 C784,729 788,733 788.5,738" fill="none" stroke="#000" stroke-width="1"/><path d="M778,728.5 L781,726.8 L780.8,730.5 Z M788.5,738.5 L786.5,735.5 H790.3 Z" fill="#000"/><path d="M804.5,730.5 L814.1,739.5 L823.7,730.5 C822,725.5 818.5,722.2 814.1,722.2 C809.7,722.2 806,725.5 804.5,730.5 Z" fill="none" stroke="#000" stroke-width="1.1"/><path d="M811,735.5 C812.5,733.8 815.7,733.8 817.2,735.5" fill="none" stroke="#000" stroke-width="1"/><path d="M810.3,736.5 L810.8,733.5 L813,735.5 Z M817.9,736.5 L817.4,733.5 L815.2,735.5 Z" fill="#000"/><rect x="842.5" y="721.8" width="9" height="7.4" fill="none" stroke="#a0a0a0" stroke-width="1.1"/><rect x="852.8" y="732.4" width="8.5" height="8" fill="none" stroke="#a0a0a0" stroke-width="1.1"/><path d="M853,729.5 L858,734" fill="none" stroke="#a0a0a0" stroke-width="1.1"/><rect x="871.5" y="725" width="6.5" height="13.5" fill="none" stroke="#a0a0a0" stroke-width="1.1"/><rect x="882.8" y="725" width="6.7" height="13.5" fill="none" stroke="#a0a0a0" stroke-width="1.1"/><path d="M880.2,722.5 V740.5 M873.5,721.5 H887" fill="none" stroke="#a0a0a0" stroke-width="1.1"/><path d="M887.5,721.5 L885,720 V723 Z" fill="#a0a0a0"/><path d="M916.5,733.9 L912.5,737.9 L906.7,737.9 L902.7,733.9 L902.7,728.1 L906.7,724.1 L912.5,724.1 L916.5,728.1 Z" fill="none" stroke="#a0a0a0" stroke-width="1.1"/><rect x="904" y="725.5" width="11" height="11" fill="none" stroke="#a0a0a0" stroke-width="1.1"/><path d="M904,721.5 H915.5" fill="none" stroke="#a0a0a0" stroke-width="1.1"/><path d="M916,721.5 L913.5,720 V723 Z" fill="#a0a0a0"/><path d="M931,727 H948.5 L945.5,738.5 H928.8 Z M935.5,727 L931.5,738.5 M931,721.5 H944" fill="none" stroke="#a0a0a0" stroke-width="1.1"/><path d="M944.5,721.5 L942,720 V723 Z" fill="#a0a0a0"/><rect x="958.8" y="725" width="18" height="13" fill="none" stroke="#a0a0a0" stroke-width="1.1"/><path d="M958.8,728.5 H972 V738 M961,721.5 H974" fill="none" stroke="#a0a0a0" stroke-width="1.1"/><path d="M974.5,721.5 L972,720 V723 Z" fill="#a0a0a0"/><rect x="990.8" y="722.5" width="3" height="3" fill="none" stroke="#a0a0a0" stroke-width="1.1"/><rect x="990.8" y="727.5" width="3" height="3" fill="none" stroke="#a0a0a0" stroke-width="1.1"/><rect x="990.8" y="732.5" width="3" height="3" fill="none" stroke="#a0a0a0" stroke-width="1.1"/><rect x="995.4" y="722.5" width="3" height="3" fill="none" stroke="#a0a0a0" stroke-width="1.1"/><rect x="995.4" y="727.5" width="3" height="3" fill="none" stroke="#a0a0a0" stroke-width="1.1"/><rect x="995.4" y="732.5" width="3" height="3" fill="none" stroke="#a0a0a0" stroke-width="1.1"/><rect x="1000.0" y="722.5" width="3" height="3" fill="none" stroke="#a0a0a0" stroke-width="1.1"/><rect x="1000.0" y="727.5" width="3" height="3" fill="none" stroke="#a0a0a0" stroke-width="1.1"/><rect x="1000.0" y="732.5" width="3" height="3" fill="none" stroke="#a0a0a0" stroke-width="1.1"/><path d="M987.5,737 V724 M991,739.8 H1003" fill="none" stroke="#a0a0a0" stroke-width="1.1"/><path d="M987.5,723 L986,725.5 H989 Z M1004,739.8 L1001.5,738.3 V741.3 Z" fill="#a0a0a0"/><path d="M1016.5,734.5 C1019,726 1024,722.8 1026.5,722.8 C1030,722.8 1035,726 1036.5,734.5" fill="none" stroke="#a0a0a0" stroke-width="1.1"/><rect x="1015.8" y="724.0" width="3" height="3" fill="#f0f0f0" stroke="#a0a0a0" stroke-width="1"/><rect x="1025.0" y="721.0" width="3" height="3" fill="#f0f0f0" stroke="#a0a0a0" stroke-width="1"/><rect x="1034.2" y="724.0" width="3" height="3" fill="#f0f0f0" stroke="#a0a0a0" stroke-width="1"/><path d="M1046.5,723.5 H1062 M1048,727 V735 M1052.5,727 V735 M1057,727 V735 M1046,739.5 C1052,738 1060,735 1063.5,729 V722" fill="none" stroke="#a0a0a0" stroke-width="1.1" stroke-dasharray="2,1"/><path d="M1046.5,735.5 L1048,738 L1049.5,735.5 Z M1051,735.5 L1052.5,738 L1054,735.5 Z M1055.5,735.5 L1057,738 L1058.5,735.5 Z" fill="#a0a0a0"/><path d="M1076.2,737.2 C1078,739 1080,738.5 1081,736 C1082,733 1081.5,731.5 1082.5,728 C1083.5,724.5 1087,722 1090.6,721.1" fill="none" stroke="#a0a0a0" stroke-width="1.1" stroke-dasharray="1.5,1"/><rect x="1074.9" y="735.9000000000001" width="2.6" height="2.6" fill="#f0f0f0" stroke="#a0a0a0" stroke-width="1"/><rect x="1080.2" y="730.1" width="2.6" height="2.6" fill="#f0f0f0" stroke="#a0a0a0" stroke-width="1"/><rect x="1082.2" y="723.0" width="2.6" height="2.6" fill="#f0f0f0" stroke="#a0a0a0" stroke-width="1"/><rect x="1089.3" y="719.8000000000001" width="2.6" height="2.6" fill="#f0f0f0" stroke="#a0a0a0" stroke-width="1"/><rect x="1104.5" y="723.5" width="16" height="13.8" fill="none" stroke="#a0a0a0" stroke-width="1.1"/><path d="M1112.5,725 V736 M1106,730.4 H1119" fill="none" stroke="#a0a0a0" stroke-width="1.1"/><path d="M1131.5,725 V738 H1134 M1131.5,725 H1134 M1151.2,725 V738 H1148.5 M1151.2,725 H1148.5 M1135,721.5 V724 H1147.5 V721.5 M1135,742 V739 H1147.5 V742 M1141.3,724.5 V738.5 M1133,731.5 H1150" fill="none" stroke="#a0a0a0" stroke-width="1.1"/><circle cx="1141.3" cy="731.5" r="5" fill="none" stroke="#a0a0a0" stroke-width="1.1"/><rect x="1160.5" y="720.5" width="21" height="20.8" fill="none" stroke="#a0a0a0" stroke-width="1.3"/><rect x="1163.8" y="723.3" width="6.5" height="6.3" fill="none" stroke="#a0a0a0" stroke-width="1.1"/><rect x="1167" y="726.8" width="6.5" height="6.3" fill="none" stroke="#a0a0a0" stroke-width="1.1"/><rect x="1170.3" y="730.5" width="6.8" height="6.6" fill="none" stroke="#a0a0a0" stroke-width="1.1"/><rect x="1192.5" y="724" width="6.5" height="6.3" fill="none" stroke="#a0a0a0" stroke-width="1.1"/><rect x="1195.7" y="727.5" width="6.5" height="6.3" fill="none" stroke="#a0a0a0" stroke-width="1.1"/><rect x="1199" y="731.2" width="7.8" height="6.9" fill="none" stroke="#a0a0a0" stroke-width="1.1"/><path d="M1220,721 H1237.6 V731 H1220 Z" fill="#a0a0a0"/><path d="M1221.8,731 A7,7 0 0 1 1235.8,731 Z" fill="#f0f0f0"/><path d="M1221.8,731 A7,9.3 0 0 0 1235.8,731 Z" fill="#a0a0a0"/><path d="M1249.4,721 H1267 V731.5 C1267,736.5 1263,740.5 1258.2,740.5 C1253.4,740.5 1249.4,736.5 1249.4,731.5 Z" fill="#a0a0a0"/><rect x="1342.7" y="106.9" width="16.1" height="17.1" fill="#c8c8c8"/><path d="M1345.5,122.5 L1346.5,118 L1354,109 C1355,108 1356.5,108.5 1357,109.8 L1357.3,111 L1349.5,120.3 Z" fill="#f0f060" stroke="#000" stroke-width="1.2"/><path d="M1345.5,122.5 L1346.5,118 L1349.5,120.3 Z" fill="#000"/><rect x="1343.2" y="127.3" width="15.1" height="16.1" fill="#fff" stroke="#808080" stroke-width="1" stroke-dasharray="1,1"/><rect x="1345" y="129" width="12" height="12.8" fill="#fff" stroke="#000" stroke-width="1.6"/><path d="M1345,129 L1357,141.8 M1357,129 L1345,141.8" stroke="#000" stroke-width="0.9"/><rect x="1342.7" y="146.8" width="16.1" height="16.1" fill="#c8c8c8"/><ellipse cx="1348" cy="161" rx="4.3" ry="1.5" fill="#0000d0"/><path d="M1347,160 L1354,152.5" stroke="#000" stroke-width="2.3"/><path d="M1348,159.5 L1353.5,153.5" stroke="#fff" stroke-width="0.8"/><circle cx="1356" cy="150.5" r="2.4" fill="#000"/><rect x="1343" y="167" width="15.5" height="15.6" fill="#404040" stroke="#000" stroke-width="1"/><rect x="1344.5" y="168.5" width="3.2" height="3.2" fill="#60d0f0"/><rect x="1347.7" y="168.5" width="3.2" height="3.2" fill="#404040"/><rect x="1350.9" y="168.5" width="3.2" height="3.2" fill="#f08080"/><rect x="1354.1" y="168.5" width="3.2" height="3.2" fill="#404040"/><rect x="1344.5" y="171.7" width="3.2" height="3.2" fill="#404040"/><rect x="1347.7" y="171.7" width="3.2" height="3.2" fill="#f0f060"/><rect x="1350.9" y="171.7" width="3.2" height="3.2" fill="#404040"/><rect x="1354.1" y="171.7" width="3.2" height="3.2" fill="#80f080"/><rect x="1344.5" y="174.9" width="3.2" height="3.2" fill="#a080f0"/><rect x="1347.7" y="174.9" width="3.2" height="3.2" fill="#404040"/><rect x="1350.9" y="174.9" width="3.2" height="3.2" fill="#60d0f0"/><rect x="1354.1" y="174.9" width="3.2" height="3.2" fill="#404040"/><rect x="1344.5" y="178.1" width="3.2" height="3.2" fill="#404040"/><rect x="1347.7" y="178.1" width="3.2" height="3.2" fill="#f080f0"/><rect x="1350.9" y="178.1" width="3.2" height="3.2" fill="#404040"/><rect x="1354.1" y="178.1" width="3.2" height="3.2" fill="#c040f0"/><path d="M1346,181 L1357,168.5" stroke="#f0f000" stroke-width="1.8"/><rect x="1197.5" y="135" width="10.5" height="10.5" fill="#fff" stroke="#000080" stroke-width="2"/><circle cx="1202.75" cy="135" r="1.5" fill="#e02020" stroke="#c00000" stroke-width="0.9"/><circle cx="1197.5" cy="140.25" r="1.5" fill="#e02020" stroke="#c00000" stroke-width="0.9"/><circle cx="1208" cy="140.25" r="1.5" fill="#e02020" stroke="#c00000" stroke-width="0.9"/><circle cx="1202.75" cy="145.5" r="1.5" fill="#e02020" stroke="#c00000" stroke-width="0.9"/></svg>
<div class="a t" style="left:2px;top:752px;font-size:13.6px">Select command tool: No selected object</div>
<div class="a" style="left:955px;top:748px;width:1px;height:18px;background:#d0d0d0"></div>
<div class="a t" style="left:960px;top:752.5px;font-size:13.5px;letter-spacing:-0.64px">654.85 78.43 0.00</div>
<div class="a" style="left:1148px;top:752px;width:21px;height:14px;background:#c8c8c8"></div>
<div class="a t" style="left:1153px;top:753px;font-size:13px;color:#505050">U</div>
<div class="a" style="left:0px;top:766px;width:1360px;height:2px;background:#000"></div>
<svg class="a" style="left:0;top:0" width="1360" height="768" viewBox="0 0 1360 768"><path d="M1311.7,691.4 C1314,683 1317.5,675.5 1321.5,670.4" fill="none" stroke="#e8262a" stroke-width="2.3" stroke-linecap="round"/><path d="M1312.7,693.3 C1317,684 1323,676 1329.8,671.8" fill="none" stroke="#2a4a9a" stroke-width="3" stroke-linecap="round"/><path d="M1314,694.3 C1318,689 1323,685 1327.8,682.6" fill="none" stroke="#f39c1e" stroke-width="2.8" stroke-linecap="round"/><path d="M1268.3,691.7 C1268.3,689 1270,687 1273,687 H1295.5 C1298.5,687 1300,689.5 1300,692.5 V736.6 H1268.3 Z" fill="#ec2226"/><ellipse cx="1287.3" cy="716" rx="12.3" ry="21" fill="#fff"/><path d="M1300,709 H1293.3 V722.2 H1300 Z" fill="#ec2226"/><ellipse cx="1287.9" cy="716" rx="5.9" ry="12.9" fill="#ec2226"/><path d="M1299.5,701 V709 M1299.5,722.2 V731" stroke="#fff" stroke-width="1.4"/><path d="M1288.6,695 V737" stroke="#b06060" stroke-width="0.7"/><path d="M1303.4,735.9 V705 L1308.3,703.5 L1319,725 V696.8 H1323.9 V735.9 H1319.5 L1308.3,714 V735.9 Z" fill="#2a4a9a"/><path d="M1303.9,705 L1322.4,735.9" stroke="#2a4a9a" stroke-width="5.2"/><path d="M1306.5,704 L1324,733.5" stroke="#fff" stroke-width="0.7"/><path d="M1308.8,692.8 L1310.3,696.4 L1314.1,696.7 L1311.2,699.2 L1312.1,702.9 L1308.8,700.9 L1305.5,702.9 L1306.4,699.2 L1303.5,696.7 L1307.3,696.4 Z" fill="#a87650"/><path d="M1348,707 C1347,701 1343.5,699.8 1338.8,699.8 C1333,699.8 1330.8,708 1330.8,716.3 C1330.8,724.5 1333,732.8 1338.8,732.8 C1343.5,732.8 1347,731 1348,722.7" fill="none" stroke="#f39c1e" stroke-width="7"/><path d="M1339.5,694 V739" stroke="#fff" stroke-width="1"/><rect x="1267.7" y="740.9" width="83.7" height="14.7" rx="7.3" fill="#2b4590" stroke="#fff" stroke-width="0.8"/><text x="1309.5" y="752.6" text-anchor="middle" font-family="Liberation Serif" font-weight="bold" font-size="12.5" fill="#fff" textLength="74.5" lengthAdjust="spacingAndGlyphs">Khomaucnc.vn</text><rect x="1274" y="758.5" width="71.8" height="1.6" fill="#b09070"/></svg>
</body></html>
